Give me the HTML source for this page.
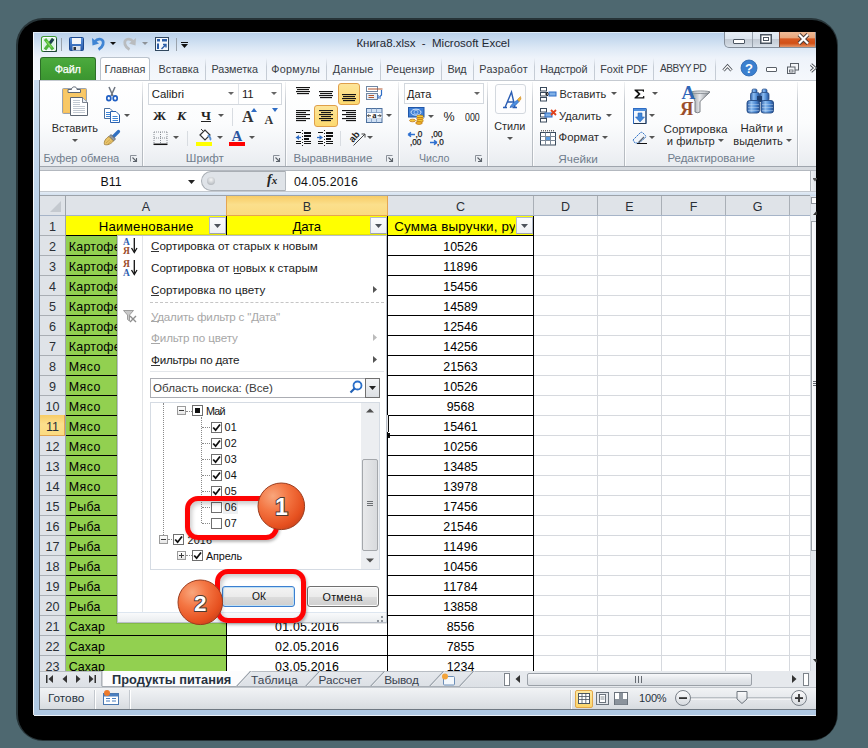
<!DOCTYPE html>
<html><head><meta charset="utf-8">
<style>
html,body{margin:0;padding:0}
body{width:868px;height:748px;overflow:hidden;background:#4e6870;position:relative;font-family:"Liberation Sans",sans-serif;color:#1e1e1e}
.a{position:absolute}
.t{position:absolute;white-space:nowrap;line-height:1}
svg{position:absolute;overflow:visible}
</style></head><body>
<div class="a" style="left:16px;top:18px;width:822px;height:723px;border-radius:27px;background:rgba(0,0,0,.5)"></div>
<div class="a" style="left:18px;top:20px;width:819px;height:720px;border-radius:25px;background:#000"></div>
<div class="a" style="left:33px;top:32px;width:783px;height:684px;background:linear-gradient(#b9d0ea,#c4d8ee 6px,#dce8f5 16px,#eef3fa 26px,#f5f8fc 48px,#d9e6f4 80px,#aec7e2 50%,#afc8e3 100%);border-radius:2px 0 0 5px"></div>
<div class="a" style="left:34px;top:80px;width:5px;height:636px;background:linear-gradient(#c9dcf0,#b9d0e8 25%,#aac4e1 50%,#b0c9e3 100%)"></div>
<div class="a" style="left:33px;top:32px;width:1px;height:683px;background:rgba(255,255,255,.85)"></div>
<div class="a" style="left:33px;top:32px;width:783px;height:1px;background:rgba(225,236,248,.9)"></div>
<div class="a" style="left:34px;top:715px;width:782px;height:1px;background:rgba(255,255,255,.75)"></div>
<div class="t" style="left:356.40px;top:37.87px;font-size:11.5px;letter-spacing:-0.012px;color:#1e2732;">Книга8.xlsx&nbsp; -&nbsp; Microsoft Excel</div>
<svg style="left:41px;top:36px" width="16" height="16">
<rect x="0.5" y="0.5" width="15" height="15" rx="2" fill="#fff" stroke="#3f9a35" stroke-width="1.1"/>
<path d="M15.5 2.5 V15.5 H2.5" fill="none" stroke="#1f4638" stroke-width="1"/>
<rect x="2" y="2" width="12" height="12" fill="#dff2e9"/>
<path d="M12 3 L4 13.5" stroke="#52b43c" stroke-width="3"/>
<path d="M12.2 2.8 L8.3 8" stroke="#1f3b52" stroke-width="2.8"/>
<path d="M4 3 L12 13.5" stroke="#4fb83a" stroke-width="3"/>
<path d="M5.5 5 L10.5 11.5" stroke="#8fdc5c" stroke-width="1.2"/>
</svg>
<div class="a" style="left:61px;top:38px;width:1px;height:13px;background:#9aa3ad"></div>
<svg style="left:69px;top:37px" width="15" height="14">
<defs><linearGradient id="sv" x1="0" y1="0" x2="0" y2="1"><stop offset="0" stop-color="#5c95dc"/><stop offset="1" stop-color="#2456a8"/></linearGradient></defs>
<rect x="0.5" y="0.5" width="14" height="13" rx="1" fill="url(#sv)" stroke="#1e4a90" stroke-width="1"/>
<rect x="3" y="1" width="9" height="6" fill="#f3f5f8"/>
<rect x="3.5" y="9" width="8" height="4.5" fill="#d9e2ec"/>
<rect x="4.5" y="10" width="2.5" height="3" fill="#2b2f36"/>
</svg>
<svg style="left:92px;top:37px" width="13" height="13">
<path d="M3 4.5 C6 0.5, 12.5 1.5, 11 7.5 C10 10.5, 8.5 11.5, 6.5 12.5" fill="none" stroke="#3f85d4" stroke-width="2.8"/>
<path d="M0 1 L0.5 8.5 L7 6.5 Z" fill="#3f85d4"/>
</svg>
<svg style="left:110px;top:42px" width="6" height="3"><path d="M0 0 H6 L3 3Z" fill="#111"/></svg>
<svg style="left:123px;top:37px" width="13" height="13">
<path d="M10 4.5 C7 0.5, 0.5 1.5, 2 7.5 C3 10.5, 4.5 11.5, 6.5 12.5" fill="none" stroke="#b9bcbf" stroke-width="2.8"/>
<path d="M13 1 L12.5 8.5 L6 6.5 Z" fill="#b9bcbf"/>
</svg>
<svg style="left:142px;top:42px" width="6" height="3"><path d="M0 0 H6 L3 3Z" fill="#8d9298"/></svg>
<svg style="left:155px;top:37px" width="14" height="14">
<rect x="0.5" y="0.5" width="13" height="13" fill="#f5f8fc" stroke="#31475e" stroke-width="1"/>
<rect x="2" y="2" width="3" height="2.5" fill="#2d5fa8"/><rect x="7" y="2" width="5" height="2.5" fill="#2d5fa8"/>
<rect x="2" y="6.5" width="2" height="5.5" fill="#2d5fa8"/>
<path d="M6.5 12 L11 7.5 M8 7.5 H11 V10.5" fill="none" stroke="#2d5fa8" stroke-width="1.4"/>
</svg>
<div class="a" style="left:176px;top:38px;width:1px;height:13px;background:#9aa3ad"></div>
<div class="a" style="left:181px;top:42px;width:7px;height:1.3px;background:#111"></div>
<svg style="left:181px;top:44px" width="7" height="4"><path d="M0 0 H7 L3.5 4Z" fill="#111"/></svg>
<div class="a" style="left:724px;top:32px;width:92px;height:16px;border:1px solid #848e9a;border-top:none;border-radius:0 0 0 5px;box-sizing:border-box;overflow:hidden;background:linear-gradient(#e6edf5,#dbe4ee 45%,#c3cbd5 50%,#cdd5de 80%,#dbe3ec)">
<div class="a" style="left:27px;top:0;width:1px;height:15px;background:#97a1ac"></div>
<div class="a" style="left:54px;top:0;width:38px;height:15px;background:linear-gradient(#eebb98,#e8a57a 40%,#d85a22 45%,#d25016 75%,#e59668);border-left:1px solid #8a4a33"></div>
</div>
<div class="a" style="left:733px;top:39px;width:12px;height:5px;background:#fff;border:1px solid #4b5561;border-radius:1px;box-sizing:border-box"></div>
<svg style="left:760px;top:34px" width="12" height="10"><rect x="0.75" y="0.75" width="10.5" height="8.5" fill="#fff" stroke="#4b5561" stroke-width="1.5"/><rect x="3.5" y="3.5" width="5" height="3" fill="none" stroke="#4b5561" stroke-width="1"/></svg>
<svg style="left:797px;top:33px" width="13" height="12"><path d="M2 1.5 L11 10.5 M11 1.5 L2 10.5" stroke="#4a3a36" stroke-width="4"/><path d="M2 1.5 L11 10.5 M11 1.5 L2 10.5" stroke="#fff" stroke-width="2.2"/></svg>
<div class="t" style="left:158.60px;top:63.86px;font-size:10.8px;letter-spacing:-0.007px;color:#383c44;">Вставка</div>
<div class="a" style="left:205px;top:58px;width:1px;height:22px;background:linear-gradient(rgba(200,208,218,0),#c5ccd5 40%,#c5ccd5)"></div>
<div class="t" style="left:211.50px;top:63.86px;font-size:10.8px;letter-spacing:-0.024px;color:#383c44;">Разметка</div>
<div class="a" style="left:266px;top:58px;width:1px;height:22px;background:linear-gradient(rgba(200,208,218,0),#c5ccd5 40%,#c5ccd5)"></div>
<div class="t" style="left:271.30px;top:63.86px;font-size:10.8px;letter-spacing:0.234px;color:#383c44;">Формулы</div>
<div class="a" style="left:326px;top:58px;width:1px;height:22px;background:linear-gradient(rgba(200,208,218,0),#c5ccd5 40%,#c5ccd5)"></div>
<div class="t" style="left:332.80px;top:63.86px;font-size:10.8px;letter-spacing:0.277px;color:#383c44;">Данные</div>
<div class="a" style="left:380px;top:58px;width:1px;height:22px;background:linear-gradient(rgba(200,208,218,0),#c5ccd5 40%,#c5ccd5)"></div>
<div class="t" style="left:386.30px;top:63.86px;font-size:10.8px;letter-spacing:0.049px;color:#383c44;">Рецензир</div>
<div class="a" style="left:441px;top:58px;width:1px;height:22px;background:linear-gradient(rgba(200,208,218,0),#c5ccd5 40%,#c5ccd5)"></div>
<div class="t" style="left:447.50px;top:63.86px;font-size:10.8px;letter-spacing:-0.269px;color:#383c44;">Вид</div>
<div class="a" style="left:473px;top:58px;width:1px;height:22px;background:linear-gradient(rgba(200,208,218,0),#c5ccd5 40%,#c5ccd5)"></div>
<div class="t" style="left:479.30px;top:63.86px;font-size:10.8px;letter-spacing:0.258px;color:#383c44;">Разработ</div>
<div class="a" style="left:534px;top:58px;width:1px;height:22px;background:linear-gradient(rgba(200,208,218,0),#c5ccd5 40%,#c5ccd5)"></div>
<div class="t" style="left:540.20px;top:63.86px;font-size:10.8px;letter-spacing:-0.171px;color:#383c44;">Надстрой</div>
<div class="a" style="left:594px;top:58px;width:1px;height:22px;background:linear-gradient(rgba(200,208,218,0),#c5ccd5 40%,#c5ccd5)"></div>
<div class="t" style="left:600.20px;top:63.86px;font-size:10.8px;letter-spacing:-0.063px;color:#383c44;">Foxit PDF</div>
<div class="a" style="left:653px;top:58px;width:1px;height:22px;background:linear-gradient(rgba(200,208,218,0),#c5ccd5 40%,#c5ccd5)"></div>
<div class="t" style="left:660.00px;top:64.37px;font-size:10.2px;letter-spacing:-0.591px;color:#383c44;">ABBYY PD</div>
<div class="a" style="left:715px;top:58px;width:1px;height:22px;background:linear-gradient(rgba(200,208,218,0),#c5ccd5 40%,#c5ccd5)"></div>
<div class="a" style="left:40px;top:57px;width:56px;height:24px;border:1px solid #2d6e28;border-bottom:none;border-radius:3px 3px 0 0;box-sizing:border-box;background:linear-gradient(#4caa3e,#42a035 50%,#3a9430)"></div>
<div class="t" style="left:54.70px;top:63.57px;font-size:10.9px;letter-spacing:-0.166px;color:#fff;-webkit-text-stroke:0.25px #fff">Файл</div>
<div class="a" style="left:100px;top:57px;width:50px;height:25px;border:1px solid #bac3cd;border-bottom:none;border-radius:3px 3px 0 0;box-sizing:border-box;background:linear-gradient(#fff,#fdfdfe)"></div>
<div class="t" style="left:104.60px;top:63.86px;font-size:10.8px;letter-spacing:-0.068px;color:#383c44;">Главная</div>
<svg style="left:722px;top:64px" width="11" height="8"><path d="M1.5 6.5 L5.5 2 L9.5 6.5" fill="none" stroke="#4a4f57" stroke-width="3"/><path d="M1.5 6.5 L5.5 2 L9.5 6.5" fill="none" stroke="#fff" stroke-width="1.2"/></svg>
<svg style="left:740px;top:59px" width="18" height="18"><circle cx="9" cy="9" r="8" fill="#3a7fcf"/><circle cx="9" cy="9" r="8" fill="none" stroke="#2b64ad" stroke-width="0.8"/>
<text x="9" y="13.8" text-anchor="middle" font-family="Liberation Sans" font-weight="bold" font-size="13" fill="#fff">?</text></svg>
<div class="a" style="left:766px;top:67px;width:11px;height:5px;background:#fff;border:1px solid #5a6068;border-radius:1px;box-sizing:border-box"></div>
<svg style="left:787px;top:63px" width="12" height="11"><rect x="3.5" y="0.5" width="8" height="6.5" fill="#f4f6f9" stroke="#5a6068" stroke-width="1"/><rect x="0.5" y="4" width="7.5" height="6.5" fill="#f4f6f9" stroke="#5a6068" stroke-width="1"/><rect x="2.5" y="7" width="3.5" height="2" fill="none" stroke="#5a6068" stroke-width="0.8"/></svg>
<svg style="left:810px;top:63px" width="6" height="10"><path d="M1 1.5 L5 5 L1 8.5" fill="none" stroke="#4a4f57" stroke-width="3"/><path d="M1 1.5 L5 5 L1 8.5" fill="none" stroke="#fff" stroke-width="1.2"/></svg>
<div class="a" style="left:39px;top:80px;width:777px;height:86px;background:linear-gradient(#ffffff,#fbfcfd 50%,#f1f3f6 80%,#e9ecf0);border-top:1px solid #c5cad1;box-sizing:border-box"></div>
<div class="a" style="left:39px;top:81px;width:1px;height:85px;background:#c9ced5"></div>
<div class="a" style="left:39px;top:166px;width:777px;height:1px;background:#9fa5ad"></div>
<div class="a" style="left:39px;top:167px;width:777px;height:3px;background:#d7dbe0"></div>
<div class="a" style="left:142px;top:82px;width:1px;height:84px;background:linear-gradient(rgba(190,195,202,.2),#c3c8ce 25%,#b4b9bf 100%)"></div>
<div class="a" style="left:143px;top:82px;width:1px;height:84px;background:rgba(255,255,255,.8)"></div>
<div class="a" style="left:285px;top:82px;width:1px;height:84px;background:linear-gradient(rgba(190,195,202,.2),#c3c8ce 25%,#b4b9bf 100%)"></div>
<div class="a" style="left:286px;top:82px;width:1px;height:84px;background:rgba(255,255,255,.8)"></div>
<div class="a" style="left:398px;top:82px;width:1px;height:84px;background:linear-gradient(rgba(190,195,202,.2),#c3c8ce 25%,#b4b9bf 100%)"></div>
<div class="a" style="left:399px;top:82px;width:1px;height:84px;background:rgba(255,255,255,.8)"></div>
<div class="a" style="left:487px;top:82px;width:1px;height:84px;background:linear-gradient(rgba(190,195,202,.2),#c3c8ce 25%,#b4b9bf 100%)"></div>
<div class="a" style="left:488px;top:82px;width:1px;height:84px;background:rgba(255,255,255,.8)"></div>
<div class="a" style="left:532px;top:82px;width:1px;height:84px;background:linear-gradient(rgba(190,195,202,.2),#c3c8ce 25%,#b4b9bf 100%)"></div>
<div class="a" style="left:533px;top:82px;width:1px;height:84px;background:rgba(255,255,255,.8)"></div>
<div class="a" style="left:624px;top:82px;width:1px;height:84px;background:linear-gradient(rgba(190,195,202,.2),#c3c8ce 25%,#b4b9bf 100%)"></div>
<div class="a" style="left:625px;top:82px;width:1px;height:84px;background:rgba(255,255,255,.8)"></div>
<div class="a" style="left:797px;top:82px;width:1px;height:84px;background:linear-gradient(rgba(190,195,202,.2),#c3c8ce 25%,#b4b9bf 100%)"></div>
<div class="a" style="left:798px;top:82px;width:1px;height:84px;background:rgba(255,255,255,.8)"></div>
<div class="t" style="left:43.40px;top:153.14px;font-size:11.18px;letter-spacing:0.003px;color:#707d8d;">Буфер обмена</div>
<svg style="left:130px;top:155px" width="7" height="7"><path d="M0.5 6.5 V0.5 H6.5" fill="none" stroke="#8a9099" stroke-width="1"/><path d="M2.5 2.5 L6 6 M3 6.5 H6.5 V3" fill="none" stroke="#5d636b" stroke-width="1.1"/></svg>
<svg style="left:61px;top:85px" width="29" height="32">
<rect x="1.5" y="3.5" width="24" height="25" rx="1" fill="#f7bf5a" stroke="#9ba4b0" stroke-width="1"/>
<rect x="3" y="5" width="21" height="22" fill="#f9cf6e" opacity=".6"/>
<path d="M7 7.5 V4.5 H10.5 C10.5 1, 16 1, 16 4.5 H19.5 V7.5 Z" fill="#fff" stroke="#5d6673" stroke-width="1"/>
<path d="M9.5 12.5 H21.5 L26.5 17.5 V30.5 H9.5 Z" fill="#fff" stroke="#5d6673" stroke-width="1"/>
<path d="M21.5 12.5 V17.5 H26.5" fill="#e9eef4" stroke="#5d6673" stroke-width="0.8"/>
<path d="M12 15.5 H19 M12 17.5 H19 M12 19.5 H19 M12 21.5 H24 M12 23.5 H24 M12 25.5 H24 M12 27.5 H24" stroke="#c3cad3" stroke-width="1"/>
</svg>
<div class="t" style="left:51.70px;top:122.96px;font-size:10.92px;letter-spacing:0.002px;color:#2b2b2b;">Вставить</div>
<svg style="left:71.5px;top:139.0px" width="6" height="3"><path d="M0 0 H6 L3 3Z" fill="#555"/></svg>
<svg style="left:106px;top:86px" width="12" height="16">
<path d="M3 1 L7 10 M9 1 L5 10" stroke="#6d7580" stroke-width="1.5"/>
<ellipse cx="2.8" cy="12.2" rx="2" ry="2.4" fill="none" stroke="#2160c4" stroke-width="1.7"/>
<ellipse cx="9.2" cy="12.2" rx="2" ry="2.4" fill="none" stroke="#2160c4" stroke-width="1.7"/>
</svg>
<svg style="left:104px;top:108px" width="16" height="15">
<path d="M0.5 0.5 H6 L8.5 3 V10.5 H0.5Z" fill="#fff" stroke="#4a6f9e" stroke-width="1"/>
<path d="M2 4.5 H6 M2 6.5 H7 M2 8.5 H7" stroke="#3d84d6" stroke-width="1"/>
<path d="M6.5 3.5 H12 L15.5 7 V14.5 H6.5Z" fill="#fff" stroke="#2a62b0" stroke-width="1"/>
<path d="M8.5 8.5 H13.5 M8.5 10.5 H14 M8.5 12.5 H14" stroke="#3d84d6" stroke-width="1"/>
</svg>
<svg style="left:123.6px;top:113.8px" width="6" height="3"><path d="M0 0 H6 L3 3Z" fill="#555"/></svg>
<svg style="left:103px;top:130px" width="18" height="16">
<path d="M10.5 6.5 L15.5 1.5" stroke="#2f6fc2" stroke-width="3.2" stroke-linecap="round"/>
<path d="M8 4.5 L12.5 9 L10.5 11 L6 6.5Z" fill="#8f96a0" stroke="#5b626b" stroke-width="0.8"/>
<path d="M6 6.5 L10.5 11 C8 14, 4.5 15.5, 1.5 14.5 C0.5 11.5, 3 8, 6 6.5Z" fill="#e9c46a" stroke="#9c7a35" stroke-width="0.8"/>
<path d="M3 13 L7 9.5 M5 14 L8.5 11" stroke="#c9a04a" stroke-width="0.8"/>
</svg>
<div class="t" style="left:185.80px;top:152.62px;font-size:11.55px;letter-spacing:0.000px;color:#707d8d;">Шрифт</div>
<svg style="left:273px;top:155px" width="7" height="7"><path d="M0.5 6.5 V0.5 H6.5" fill="none" stroke="#8a9099" stroke-width="1"/><path d="M2.5 2.5 L6 6 M3 6.5 H6.5 V3" fill="none" stroke="#5d636b" stroke-width="1.1"/></svg>
<div class="a" style="left:148px;top:83px;width:134px;height:22px;background:#fff;border:1px solid #d3d8de;box-sizing:border-box"></div>
<div class="a" style="left:238px;top:84px;width:1px;height:20px;background:#dfe3e8"></div>
<div class="t" style="left:151.70px;top:88.85px;font-size:11.4px;letter-spacing:-0.001px;color:#1a1a1a;">Calibri</div>
<svg style="left:228.2px;top:92.0px" width="6" height="3"><path d="M0 0 H6 L3 3Z" fill="#666"/></svg>
<div class="t" style="left:242.00px;top:88.85px;font-size:11.4px;letter-spacing:-0.333px;color:#1a1a1a;">11</div>
<svg style="left:271.4px;top:92.0px" width="6" height="3"><path d="M0 0 H6 L3 3Z" fill="#666"/></svg>
<div class="t" style="left:153px;top:108.7px;font-size:13.2px;font-family:'Liberation Serif',serif;font-weight:bold;color:#222">Ж</div>
<div class="t" style="left:177px;top:108.7px;font-size:13.5px;font-family:'Liberation Serif',serif;font-weight:bold;font-style:italic;color:#222">К</div>
<div class="t" style="left:201px;top:108.7px;font-size:13.5px;font-family:'Liberation Serif',serif;font-weight:bold;color:#222">Ч</div>
<div class="a" style="left:201px;top:121px;width:10px;height:1px;background:#222"></div>
<svg style="left:218px;top:113.5px" width="6" height="3"><path d="M0 0 H6 L3 3Z" fill="#555"/></svg>
<div class="a" style="left:232px;top:108px;width:1px;height:18px;background:#d8dce1"></div>
<div class="t" style="left:242px;top:109px;font-size:16px;font-family:'Liberation Serif',serif;font-weight:bold;color:#333">A</div>
<svg style="left:251px;top:108px" width="6" height="4"><path d="M0 4 L3 0 L6 4Z" fill="#2e6cc4"/></svg>
<div class="t" style="left:264.5px;top:113.8px;font-size:12px;font-family:'Liberation Serif',serif;font-weight:bold;color:#333">A</div>
<svg style="left:272px;top:108px" width="6" height="4"><path d="M0 0 L3 4 L6 0Z" fill="#2e6cc4"/></svg>
<svg style="left:153px;top:131px" width="15" height="14">
<path d="M1 1 H14 M1 7 H14 M1 1 V13 M7.5 1 V13 M14 1 V13" stroke="#8a8f96" stroke-width="1" stroke-dasharray="1 1"/>
<path d="M0.5 13.3 H14.5" stroke="#111" stroke-width="1.5"/></svg>
<svg style="left:173.3px;top:136.1px" width="6" height="3"><path d="M0 0 H6 L3 3Z" fill="#555"/></svg>
<div class="a" style="left:187px;top:131px;width:1px;height:15px;background:#d8dce1"></div>
<svg style="left:196px;top:129px" width="16" height="17">
<path d="M4 6 L9 1 L14 6 L9 11 Z" fill="#fff" stroke="#333" stroke-width="1.2"/>
<path d="M12 6 C14 8, 15 10, 14 11" stroke="#5a8fd0" stroke-width="2" fill="none"/>
<path d="M7 2 L5 0" stroke="#333" stroke-width="1"/>
<rect x="0" y="13" width="16" height="4" fill="#ffff00"/></svg>
<svg style="left:216.5px;top:136.1px" width="6" height="3"><path d="M0 0 H6 L3 3Z" fill="#555"/></svg>
<svg style="left:229px;top:129px" width="16" height="17">
<text x="8" y="12" text-anchor="middle" font-family="Liberation Serif" font-weight="bold" font-size="15" fill="#2a55a0">A</text>
<rect x="0" y="13" width="16" height="4" fill="#ff0000"/></svg>
<svg style="left:249.3px;top:136.1px" width="6" height="3"><path d="M0 0 H6 L3 3Z" fill="#555"/></svg>
<div class="t" style="left:293.50px;top:153.20px;font-size:11.46px;letter-spacing:0.002px;color:#707d8d;">Выравнивание</div>
<svg style="left:386px;top:155px" width="7" height="7"><path d="M0.5 6.5 V0.5 H6.5" fill="none" stroke="#8a9099" stroke-width="1"/><path d="M2.5 2.5 L6 6 M3 6.5 H6.5 V3" fill="none" stroke="#5d636b" stroke-width="1.1"/></svg>
<div class="a" style="left:296px;top:87px;width:14px;height:1px;background:#151515;box-shadow:0 0.4px 0 rgba(0,0,0,.35)"></div>
<div class="a" style="left:319px;top:91px;width:14px;height:1px;background:#151515;box-shadow:0 0.4px 0 rgba(0,0,0,.35)"></div>
<div class="a" style="left:297px;top:89px;width:12px;height:1px;background:#151515;box-shadow:0 0.4px 0 rgba(0,0,0,.35)"></div>
<div class="a" style="left:320px;top:93px;width:12px;height:1px;background:#151515;box-shadow:0 0.4px 0 rgba(0,0,0,.35)"></div>
<div class="a" style="left:296px;top:91px;width:14px;height:1px;background:#151515;box-shadow:0 0.4px 0 rgba(0,0,0,.35)"></div>
<div class="a" style="left:319px;top:95px;width:14px;height:1px;background:#151515;box-shadow:0 0.4px 0 rgba(0,0,0,.35)"></div>
<div class="a" style="left:297px;top:93px;width:12px;height:1px;background:#151515;box-shadow:0 0.4px 0 rgba(0,0,0,.35)"></div>
<div class="a" style="left:320px;top:97px;width:12px;height:1px;background:#151515;box-shadow:0 0.4px 0 rgba(0,0,0,.35)"></div>
<div class="a" style="left:338px;top:83px;width:22px;height:22px;background:linear-gradient(#fde59a,#fcd96f);border:1px solid #df9f4a;border-radius:3px;box-sizing:border-box"></div>
<div class="a" style="left:342px;top:94px;width:14px;height:1px;background:#151515;box-shadow:0 0.4px 0 rgba(0,0,0,.35)"></div>
<div class="a" style="left:343px;top:96px;width:12px;height:1px;background:#151515;box-shadow:0 0.4px 0 rgba(0,0,0,.35)"></div>
<div class="a" style="left:342px;top:98px;width:14px;height:1px;background:#151515;box-shadow:0 0.4px 0 rgba(0,0,0,.35)"></div>
<div class="a" style="left:343px;top:100px;width:12px;height:1px;background:#151515;box-shadow:0 0.4px 0 rgba(0,0,0,.35)"></div>
<div class="a" style="left:314px;top:105px;width:24px;height:22px;background:linear-gradient(#fde59a,#fcd96f);border:1px solid #df9f4a;border-radius:3px;box-sizing:border-box"></div>
<div class="a" style="left:296px;top:110px;width:14px;height:1px;background:#151515;box-shadow:0 0.4px 0 rgba(0,0,0,.35)"></div>
<div class="a" style="left:319px;top:110px;width:14px;height:1px;background:#151515;box-shadow:0 0.4px 0 rgba(0,0,0,.35)"></div>
<div class="a" style="left:342px;top:110px;width:14px;height:1px;background:#151515;box-shadow:0 0.4px 0 rgba(0,0,0,.35)"></div>
<div class="a" style="left:296px;top:112px;width:10px;height:1px;background:#151515;box-shadow:0 0.4px 0 rgba(0,0,0,.35)"></div>
<div class="a" style="left:321px;top:112px;width:10px;height:1px;background:#151515;box-shadow:0 0.4px 0 rgba(0,0,0,.35)"></div>
<div class="a" style="left:346px;top:112px;width:10px;height:1px;background:#151515;box-shadow:0 0.4px 0 rgba(0,0,0,.35)"></div>
<div class="a" style="left:296px;top:114px;width:14px;height:1px;background:#151515;box-shadow:0 0.4px 0 rgba(0,0,0,.35)"></div>
<div class="a" style="left:319px;top:114px;width:14px;height:1px;background:#151515;box-shadow:0 0.4px 0 rgba(0,0,0,.35)"></div>
<div class="a" style="left:342px;top:114px;width:14px;height:1px;background:#151515;box-shadow:0 0.4px 0 rgba(0,0,0,.35)"></div>
<div class="a" style="left:296px;top:116px;width:10px;height:1px;background:#151515;box-shadow:0 0.4px 0 rgba(0,0,0,.35)"></div>
<div class="a" style="left:321px;top:116px;width:10px;height:1px;background:#151515;box-shadow:0 0.4px 0 rgba(0,0,0,.35)"></div>
<div class="a" style="left:346px;top:116px;width:10px;height:1px;background:#151515;box-shadow:0 0.4px 0 rgba(0,0,0,.35)"></div>
<div class="a" style="left:296px;top:118px;width:14px;height:1px;background:#151515;box-shadow:0 0.4px 0 rgba(0,0,0,.35)"></div>
<div class="a" style="left:319px;top:118px;width:14px;height:1px;background:#151515;box-shadow:0 0.4px 0 rgba(0,0,0,.35)"></div>
<div class="a" style="left:342px;top:118px;width:14px;height:1px;background:#151515;box-shadow:0 0.4px 0 rgba(0,0,0,.35)"></div>
<div class="a" style="left:296px;top:120px;width:10px;height:1px;background:#151515;box-shadow:0 0.4px 0 rgba(0,0,0,.35)"></div>
<div class="a" style="left:321px;top:120px;width:10px;height:1px;background:#151515;box-shadow:0 0.4px 0 rgba(0,0,0,.35)"></div>
<div class="a" style="left:346px;top:120px;width:10px;height:1px;background:#151515;box-shadow:0 0.4px 0 rgba(0,0,0,.35)"></div>
<svg style="left:365px;top:85px" width="18" height="16">
<rect x="1.5" y="1.5" width="11" height="5" fill="#fff" stroke="#6f86a3" stroke-width="1"/>
<path d="M3 4 H17.5" stroke="#b0552e" stroke-width="1"/>
<rect x="1.5" y="8.5" width="11" height="6" fill="#e8f0f8" stroke="#6f86a3" stroke-width="1"/>
<path d="M3.5 10.5 H9 M3.5 12.5 H9" stroke="#b0552e" stroke-width="1"/>
<path d="M16.5 5 V10 L14.5 12" fill="none" stroke="#2e6cc4" stroke-width="1.2"/><path d="M13 10 V13 H16" fill="none" stroke="#2e6cc4" stroke-width="1.1"/>
</svg>
<svg style="left:366px;top:108px" width="17" height="15">
<rect x="0.5" y="0.5" width="15.5" height="14" fill="#cfe0f4" stroke="#4c6f9c" stroke-width="1"/>
<path d="M0.5 4.5 H16 M0.5 10.5 H16 M5.5 0.5 V4.5 M10.5 0.5 V4.5 M5.5 10.5 V14.5 M10.5 10.5 V14.5" stroke="#7d9bc0" stroke-width="0.8"/>
<rect x="1" y="5" width="14.5" height="5.5" fill="#fff"/>
<text x="8.3" y="10.2" text-anchor="middle" font-family="Liberation Serif" font-size="8.5" font-weight="bold" fill="#222">a</text>
<path d="M1.5 7.7 H5 M15 7.7 H11.5" stroke="#333" stroke-width="0.9"/><path d="M3 6.2 L1.5 7.7 L3 9.2 M13.5 6.2 L15 7.7 L13.5 9.2" fill="none" stroke="#333" stroke-width="0.8"/>
</svg>
<svg style="left:385.5px;top:113.5px" width="6" height="3"><path d="M0 0 H6 L3 3Z" fill="#555"/></svg>
<svg style="left:295px;top:130px" width="16" height="16">
<path d="M7.5 0 V16" stroke="#222" stroke-width="1" stroke-dasharray="1 2"/>
<rect x="9" y="2" width="7" height="2" fill="#111"/><rect x="9" y="5" width="7" height="2" fill="#111"/><rect x="9" y="8" width="5" height="2" fill="#111"/>
<rect x="1" y="11" width="5" height="1" fill="#111"/><rect x="9" y="11" width="7" height="1" fill="#111"/>
<rect x="1" y="13" width="5" height="1" fill="#111"/><rect x="9" y="13" width="7" height="1" fill="#111"/>
<rect x="1" y="2" width="5" height="1" fill="#111"/>
<path d="M0.5 7.5 L4 5 V10Z" fill="#2e6cc4"/><path d="M2.5 7.5 H6" stroke="#2e6cc4" stroke-width="1.3"/></svg>
<svg style="left:317px;top:130px" width="16" height="16">
<path d="M7.5 0 V16" stroke="#222" stroke-width="1" stroke-dasharray="1 2"/>
<rect x="9" y="2" width="7" height="2" fill="#111"/><rect x="9" y="5" width="7" height="2" fill="#111"/><rect x="9" y="8" width="5" height="2" fill="#111"/>
<rect x="1" y="11" width="5" height="1" fill="#111"/><rect x="9" y="11" width="7" height="1" fill="#111"/>
<rect x="1" y="13" width="5" height="1" fill="#111"/><rect x="9" y="13" width="7" height="1" fill="#111"/>
<rect x="1" y="2" width="5" height="1" fill="#111"/>
<path d="M6 7.5 L2.5 5 V10Z" fill="#2e6cc4"/><path d="M0 7.5 H3.5" stroke="#2e6cc4" stroke-width="1.3"/></svg>
<div class="a" style="left:340px;top:131px;width:1px;height:15px;background:#d8dce1"></div>
<svg style="left:348px;top:128px" width="20" height="19">
<text x="0" y="0" transform="translate(5 15) rotate(-50)" font-family="Liberation Sans" font-weight="bold" font-size="9.5" fill="#222">ab</text>
<path d="M5.5 17.5 L17 6 M13.5 6 H17 V9.5" fill="none" stroke="#444" stroke-width="1"/></svg>
<svg style="left:366.6px;top:135.9px" width="6" height="3"><path d="M0 0 H6 L3 3Z" fill="#555"/></svg>
<div class="t" style="left:418.90px;top:153.49px;font-size:10.64px;letter-spacing:0.000px;color:#707d8d;">Число</div>
<svg style="left:475px;top:155px" width="7" height="7"><path d="M0.5 6.5 V0.5 H6.5" fill="none" stroke="#8a9099" stroke-width="1"/><path d="M2.5 2.5 L6 6 M3 6.5 H6.5 V3" fill="none" stroke="#5d636b" stroke-width="1.1"/></svg>
<div class="a" style="left:404px;top:83px;width:80px;height:21px;background:#fff;border:1px solid #d3d8de;box-sizing:border-box"></div>
<div class="t" style="left:407.00px;top:89.01px;font-size:10.97px;letter-spacing:0.004px;color:#1a1a1a;">Дата</div>
<svg style="left:473.5px;top:91.8px" width="6" height="3"><path d="M0 0 H6 L3 3Z" fill="#666"/></svg>
<svg style="left:408px;top:107px" width="17" height="18">
<rect x="0.5" y="0.5" width="15.5" height="9.5" fill="#3f7fd6" stroke="#1f56a8" stroke-width="1"/>
<ellipse cx="8" cy="5.2" rx="5" ry="3" fill="none" stroke="#d6e6fa" stroke-width="1"/>
<ellipse cx="8" cy="5.2" rx="2" ry="2" fill="none" stroke="#b8d2f2" stroke-width=".8"/>
<g stroke="#b86a10" stroke-width=".7"><ellipse cx="12" cy="9.5" rx="3.3" ry="1.4" fill="#f5d23a"/><ellipse cx="12" cy="11.7" rx="3.3" ry="1.4" fill="#f0b82a"/><ellipse cx="12" cy="13.9" rx="3.3" ry="1.4" fill="#f5d23a"/><ellipse cx="11" cy="16" rx="3.3" ry="1.4" fill="#f0b82a"/>
<ellipse cx="4.5" cy="13.5" rx="3" ry="1.3" fill="#f5c83a"/></g>
</svg>
<svg style="left:428.3px;top:114.5px" width="6" height="3"><path d="M0 0 H6 L3 3Z" fill="#555"/></svg>
<div class="t" style="left:443.40px;top:110.72px;font-size:12.5px;color:#222;">%</div>
<div class="t" style="left:465.4px;top:110.8px;font-size:11.6px;color:#222;transform:scaleX(0.76);transform-origin:0 0">000</div>
<svg style="left:407px;top:129px" width="40" height="18">
<g font-family="Liberation Sans" font-size="8.2" fill="#222" stroke="#222" stroke-width=".25">
<text x="8.5" y="7.6">,0</text><text x="3" y="15.6">,00</text>
<text x="24" y="7.6">,00</text><text x="30" y="15.6">,0</text></g>
<path d="M1 5.5 L4 3.3 M1 5.5 L4 7.7 M1 5.5 H8" fill="none" stroke="#2d6fd0" stroke-width="1.5"/>
<path d="M30 13.5 L27 11.3 M30 13.5 L27 15.7 M30 13.5 H23" fill="none" stroke="#2d6fd0" stroke-width="1.5"/>
</svg>
<div class="a" style="left:495px;top:84px;width:31px;height:30px;background:#fdfdfe;border:1px solid #d3d8de;border-radius:3px;box-sizing:border-box"></div>
<svg style="left:502px;top:91px" width="20" height="18">
<path d="M1 16.5 H5 M10.5 16.5 H15 M3 16.5 L9.5 1 L13 16.5 M5 11 H11.5" fill="none" stroke="#2a5db3" stroke-width="1.4"/>
<path d="M8 16.5 C10 12, 13 10.5, 16 9 L17 10.5 C15 13, 12 16, 8 16.5Z" fill="#4d8fe0" stroke="#2a5db3" stroke-width=".7"/>
<path d="M15.5 8.5 L18.5 5.5 L19 8 L17 10.5Z" fill="#f2b632" stroke="#c47a1a" stroke-width=".5"/>
</svg>
<div class="t" style="left:494.20px;top:121.06px;font-size:10.8px;letter-spacing:-0.003px;color:#2b2b2b;">Стили</div>
<svg style="left:507.3px;top:137.0px" width="6" height="3"><path d="M0 0 H6 L3 3Z" fill="#555"/></svg>
<div class="t" style="left:558.30px;top:152.65px;font-size:11.75px;letter-spacing:-0.002px;color:#707d8d;">Ячейки</div>
<svg style="left:540px;top:87px" width="17" height="15"><rect x="0.5" y="0.5" width="6" height="3.5" fill="#fff" stroke="#3a4a5c" stroke-width="1"/><rect x="0.5" y="5.5" width="6" height="3.5" fill="#fff" stroke="#3a4a5c" stroke-width="1"/><rect x="0.5" y="10.5" width="6" height="3.5" fill="#fff" stroke="#3a4a5c" stroke-width="1"/><rect x="9" y="5" width="7" height="4" fill="#7fb0e6" stroke="#2e6cc4" stroke-width="1"/><path d="M5 7 H9" stroke="#222" stroke-width="1"/><path d="M8 5 L6 7 L8 9" fill="none" stroke="#222" stroke-width="1"/></svg>
<div class="t" style="left:559.50px;top:88.99px;font-size:11px;letter-spacing:0.011px;color:#2b2b2b;">Вставить</div>
<svg style="left:610.5px;top:91.8px" width="6" height="3"><path d="M0 0 H6 L3 3Z" fill="#555"/></svg>
<svg style="left:540px;top:108px" width="17" height="15"><rect x="0.5" y="0.5" width="6" height="3.5" fill="#fff" stroke="#3a4a5c" stroke-width="1"/><rect x="0.5" y="5.5" width="6" height="3.5" fill="#fff" stroke="#3a4a5c" stroke-width="1"/><rect x="0.5" y="10.5" width="6" height="3.5" fill="#fff" stroke="#3a4a5c" stroke-width="1"/><rect x="5" y="5" width="7" height="4" fill="#7fb0e6" stroke="#2e6cc4" stroke-width="1"/><path d="M11 2 L16 7 M16 2 L11 7" stroke="#e0401a" stroke-width="1.8"/></svg>
<div class="t" style="left:559.00px;top:110.80px;font-size:11.11px;letter-spacing:-0.002px;color:#2b2b2b;">Удалить</div>
<svg style="left:605.6px;top:114.0px" width="6" height="3"><path d="M0 0 H6 L3 3Z" fill="#555"/></svg>
<svg style="left:540px;top:130px" width="17" height="16">
<rect x="0.5" y="2.5" width="15" height="12.5" fill="#fff" stroke="#3a4a5c" stroke-width="1"/>
<path d="M0.5 6.5 H15.5 M0.5 10.5 H15.5 M5.5 2.5 V15 M10.5 2.5 V15" stroke="#7d8a99" stroke-width="1"/>
<rect x="6" y="7" width="4" height="3" fill="#5b9be0"/>
<path d="M1 0.8 H15" stroke="#333" stroke-width="1" stroke-dasharray="1 1"/></svg>
<div class="t" style="left:558.60px;top:132.38px;font-size:11.37px;letter-spacing:0.003px;color:#2b2b2b;">Формат</div>
<svg style="left:602.4px;top:136.0px" width="6" height="3"><path d="M0 0 H6 L3 3Z" fill="#555"/></svg>
<div class="t" style="left:667.40px;top:153.49px;font-size:11.47px;letter-spacing:0.002px;color:#707d8d;">Редактирование</div>
<svg style="left:634px;top:89px" width="11" height="10"><path d="M0.5 0.5 H10 V2.8 H9 L8.6 1.8 H3.6 L6.6 5 L3.4 8.2 H8.8 L9.3 7 H10.3 V9.5 H0.5 V8.6 L4.3 5 L0.5 1.4Z" fill="#111"/></svg>
<svg style="left:651.6px;top:92.0px" width="6" height="3"><path d="M0 0 H6 L3 3Z" fill="#555"/></svg>
<svg style="left:633px;top:108px" width="14" height="16">
<rect x="0.5" y="0.5" width="12.5" height="15" fill="#f4f8fd" stroke="#2e6cc4" stroke-width="1"/>
<path d="M13 1 V15.5 H1" fill="none" stroke="#23364f" stroke-width="1"/>
<rect x="1" y="1" width="12" height="2" fill="#4f8fdc"/>
<path d="M5 5 H9 V9 H11.5 L7 14 L2.5 9 H5Z" fill="#3f86d8" stroke="#2a66b8" stroke-width=".6"/></svg>
<svg style="left:649px;top:114.0px" width="6" height="3"><path d="M0 0 H6 L3 3Z" fill="#555"/></svg>
<svg style="left:632px;top:131px" width="16" height="13">
<path d="M1 9 L8 2 C9 1, 10 1, 11 2 L13 4 C14 5, 14 6, 13 7 L7 12 H3 Z" fill="#f1f5fa" stroke="#3a78c8" stroke-width="1" stroke-dasharray="2 .6"/><path d="M12 6 L6.5 11.5" stroke="#5b6470" stroke-width="1.2"/>
<path d="M5 12.5 H15" stroke="#111" stroke-width="1"/></svg>
<svg style="left:649px;top:136.0px" width="6" height="3"><path d="M0 0 H6 L3 3Z" fill="#555"/></svg>
<svg style="left:680px;top:85px" width="31" height="31">
<defs><linearGradient id="fn" x1="0" x2="1"><stop offset="0" stop-color="#8c9198"/><stop offset=".45" stop-color="#e9ebee"/><stop offset="1" stop-color="#7d838a"/></linearGradient></defs>
<path d="M11.5 7 H30 L20 16.5 V27 Q17.5 28.5 15 27 V16.5 Z" fill="url(#fn)" stroke="#6f757c" stroke-width=".9"/>
<ellipse cx="20.7" cy="7.2" rx="9.3" ry="1.3" fill="#d9dcdf" stroke="#6f757c" stroke-width=".7"/>
<text x="1.5" y="14.4" font-family="Liberation Serif" font-weight="bold" font-size="19" fill="#2f66b8">A</text>
<text x="0" y="29.6" font-family="Liberation Serif" font-weight="bold" font-size="18.5" fill="#9b4e2c">Я</text>
</svg>
<div class="t" style="left:663.50px;top:122.61px;font-size:11.68px;letter-spacing:0.000px;color:#2b2b2b;">Сортировка</div>
<div class="t" style="left:666.80px;top:135.72px;font-size:11.2px;letter-spacing:0.058px;color:#2b2b2b;">и фильтр</div>
<svg style="left:718.2px;top:138.8px" width="6" height="3"><path d="M0 0 H6 L3 3Z" fill="#555"/></svg>
<svg style="left:746px;top:88px" width="30" height="27">
<defs><linearGradient id="bn" x1="0" x2="1"><stop offset="0" stop-color="#2d5fa8"/><stop offset=".35" stop-color="#8dbdf0"/><stop offset=".7" stop-color="#4a86d0"/><stop offset="1" stop-color="#254f8f"/></linearGradient></defs>
<rect x="6" y="1" width="5" height="4" rx="1.5" fill="url(#bn)" stroke="#2a4f86" stroke-width=".7"/>
<rect x="16" y="1" width="5" height="4" rx="1.5" fill="url(#bn)" stroke="#2a4f86" stroke-width=".7"/>
<rect x="4.5" y="4.5" width="9" height="8.5" rx="2" fill="url(#bn)" stroke="#2a4f86" stroke-width=".8"/>
<rect x="14" y="4.5" width="9" height="8.5" rx="2" fill="url(#bn)" stroke="#2a4f86" stroke-width=".8"/>
<rect x="11" y="8" width="5" height="6" fill="#1f3f70"/>
<rect x="1" y="12.5" width="12.5" height="12.5" rx="2.5" fill="url(#bn)" stroke="#244a82" stroke-width=".9"/>
<rect x="15" y="12.5" width="12.5" height="12.5" rx="2.5" fill="url(#bn)" stroke="#244a82" stroke-width=".9"/>
<path d="M2 16.5 H13 M2 19.5 H13 M2 22.5 H13 M16 16.5 H27 M16 19.5 H27 M16 22.5 H27" stroke="#cfe2f7" stroke-width=".6" opacity=".7"/>
</svg>
<div class="t" style="left:740.60px;top:122.82px;font-size:11.44px;letter-spacing:-0.002px;color:#2b2b2b;">Найти и</div>
<div class="t" style="left:733.30px;top:135.84px;font-size:11.06px;letter-spacing:-0.003px;color:#2b2b2b;">выделить</div>
<svg style="left:786px;top:138.8px" width="6" height="3"><path d="M0 0 H6 L3 3Z" fill="#555"/></svg>
<div class="a" style="left:39px;top:170px;width:777px;height:1px;background:#b3b8bf"></div>
<div class="a" style="left:39px;top:171px;width:777px;height:20px;background:#fff"></div>
<div class="a" style="left:39px;top:191px;width:777px;height:1px;background:#c3c8ce"></div>
<div class="a" style="left:39px;top:192px;width:777px;height:3px;background:linear-gradient(#e3ecf6,#d3e0ee)"></div>
<div class="t" style="left:100.45px;top:175.73px;font-size:12.37px;letter-spacing:0.005px;color:#111;">B11</div>
<svg style="left:188px;top:180px" width="7" height="4"><path d="M0 0 H7 L3.5 4Z" fill="#222"/></svg>
<div class="a" style="left:201px;top:171px;width:85px;height:20px;background:#dfe3e8;border:1px solid #a9aeb4;border-right:1px solid #b5bac0;border-radius:10px 0 0 10px;box-sizing:border-box"></div>
<svg style="left:206px;top:176px" width="10" height="10"><defs><radialGradient id="gc" cx="50%" cy="35%" r="60%"><stop offset="0" stop-color="#f4f5f6"/><stop offset="1" stroke-color="#b3b7bc" stop-color="#b8bcc1"/></radialGradient></defs><circle cx="5" cy="5" r="4" fill="url(#gc)"/></svg>
<div class="t" style="left:267px;top:173px;font-size:14px;font-family:'Liberation Serif',serif;font-style:italic;font-weight:bold;color:#222">f<span style="font-size:11px;position:relative;left:0px;top:0px">x</span></div>
<div class="t" style="left:294.00px;top:175.83px;font-size:12.37px;letter-spacing:0.211px;color:#111;">04.05.2016</div>
<div class="a" style="left:810px;top:171px;width:6px;height:20px;background:linear-gradient(90deg,#f0f2f5,#dde1e6);border-left:1px solid #b0b5bb;box-sizing:border-box"></div>
<svg style="left:813px;top:178px" width="4" height="4"><path d="M0 0 H4 V1 L2 3.5 L0 1Z" fill="#555"/></svg>
<div class="a" style="left:39px;top:195px;width:771px;height:1px;background:#9da3aa"></div>
<div class="a" style="left:39px;top:196px;width:771px;height:19px;background:#dfe3e8"></div>
<div class="a" style="left:39px;top:215px;width:771px;height:1px;background:#a6b4c8"></div>
<svg style="left:50px;top:201px" width="12" height="11"><path d="M11 0 L11 11 L0 11 Z" fill="#c4c9cf"/></svg>
<div class="a" style="left:39px;top:216px;width:771px;height:455px;background:#fff"></div>
<div class="a" style="left:39px;top:216px;width:26px;height:455px;background:#dfe3e8"></div>
<div class="a" style="left:65px;top:196px;width:1px;height:475px;background:#9ea4ab"></div>
<div class="a" style="left:226px;top:196px;width:1px;height:19px;background:#a9afb6"></div>
<div class="t" style="left:141.83px;top:201.02px;font-size:12.5px;color:#2a2f36;">A</div>
<div class="a" style="left:227px;top:196px;width:160px;height:19px;background:linear-gradient(#f7cc66,#fbdf8c 45%,#fbdb80)"></div>
<div class="a" style="left:226px;top:196px;width:1px;height:20px;background:#e4a552"></div>
<div class="a" style="left:227px;top:215px;width:161px;height:1px;background:#e4a552"></div>
<div class="a" style="left:387px;top:196px;width:1px;height:19px;background:#e4a552"></div>
<div class="t" style="left:302.83px;top:201.02px;font-size:12.5px;color:#2a2f36;">B</div>
<div class="a" style="left:533px;top:196px;width:1px;height:19px;background:#a9afb6"></div>
<div class="t" style="left:455.99px;top:201.02px;font-size:12.5px;color:#2a2f36;">C</div>
<div class="a" style="left:597px;top:196px;width:1px;height:19px;background:#a9afb6"></div>
<div class="t" style="left:560.99px;top:201.02px;font-size:12.5px;color:#2a2f36;">D</div>
<div class="a" style="left:661px;top:196px;width:1px;height:19px;background:#a9afb6"></div>
<div class="t" style="left:625.33px;top:201.02px;font-size:12.5px;color:#2a2f36;">E</div>
<div class="a" style="left:725px;top:196px;width:1px;height:19px;background:#a9afb6"></div>
<div class="t" style="left:689.68px;top:201.02px;font-size:12.5px;color:#2a2f36;">F</div>
<div class="a" style="left:789px;top:196px;width:1px;height:19px;background:#a9afb6"></div>
<div class="t" style="left:752.64px;top:201.02px;font-size:12.5px;color:#2a2f36;">G</div>
<div class="a" style="left:226px;top:216px;width:1px;height:455px;background:#d6d9de"></div>
<div class="a" style="left:387px;top:216px;width:1px;height:455px;background:#d6d9de"></div>
<div class="a" style="left:533px;top:216px;width:1px;height:455px;background:#d6d9de"></div>
<div class="a" style="left:597px;top:216px;width:1px;height:455px;background:#d6d9de"></div>
<div class="a" style="left:661px;top:216px;width:1px;height:455px;background:#d6d9de"></div>
<div class="a" style="left:725px;top:216px;width:1px;height:455px;background:#d6d9de"></div>
<div class="a" style="left:789px;top:216px;width:1px;height:455px;background:#d6d9de"></div>
<div class="a" style="left:39px;top:235px;width:26px;height:1px;background:#a9aeb4"></div>
<div class="a" style="left:66px;top:235px;width:744px;height:1px;background:#d6d9de"></div>
<div class="a" style="left:39px;top:255px;width:26px;height:1px;background:#a9aeb4"></div>
<div class="a" style="left:66px;top:255px;width:744px;height:1px;background:#d6d9de"></div>
<div class="a" style="left:39px;top:275px;width:26px;height:1px;background:#a9aeb4"></div>
<div class="a" style="left:66px;top:275px;width:744px;height:1px;background:#d6d9de"></div>
<div class="a" style="left:39px;top:295px;width:26px;height:1px;background:#a9aeb4"></div>
<div class="a" style="left:66px;top:295px;width:744px;height:1px;background:#d6d9de"></div>
<div class="a" style="left:39px;top:315px;width:26px;height:1px;background:#a9aeb4"></div>
<div class="a" style="left:66px;top:315px;width:744px;height:1px;background:#d6d9de"></div>
<div class="a" style="left:39px;top:335px;width:26px;height:1px;background:#a9aeb4"></div>
<div class="a" style="left:66px;top:335px;width:744px;height:1px;background:#d6d9de"></div>
<div class="a" style="left:39px;top:355px;width:26px;height:1px;background:#a9aeb4"></div>
<div class="a" style="left:66px;top:355px;width:744px;height:1px;background:#d6d9de"></div>
<div class="a" style="left:39px;top:375px;width:26px;height:1px;background:#a9aeb4"></div>
<div class="a" style="left:66px;top:375px;width:744px;height:1px;background:#d6d9de"></div>
<div class="a" style="left:39px;top:395px;width:26px;height:1px;background:#a9aeb4"></div>
<div class="a" style="left:66px;top:395px;width:744px;height:1px;background:#d6d9de"></div>
<div class="a" style="left:39px;top:415px;width:26px;height:1px;background:#a9aeb4"></div>
<div class="a" style="left:66px;top:415px;width:744px;height:1px;background:#d6d9de"></div>
<div class="a" style="left:39px;top:435px;width:26px;height:1px;background:#a9aeb4"></div>
<div class="a" style="left:66px;top:435px;width:744px;height:1px;background:#d6d9de"></div>
<div class="a" style="left:39px;top:455px;width:26px;height:1px;background:#a9aeb4"></div>
<div class="a" style="left:66px;top:455px;width:744px;height:1px;background:#d6d9de"></div>
<div class="a" style="left:39px;top:475px;width:26px;height:1px;background:#a9aeb4"></div>
<div class="a" style="left:66px;top:475px;width:744px;height:1px;background:#d6d9de"></div>
<div class="a" style="left:39px;top:495px;width:26px;height:1px;background:#a9aeb4"></div>
<div class="a" style="left:66px;top:495px;width:744px;height:1px;background:#d6d9de"></div>
<div class="a" style="left:39px;top:515px;width:26px;height:1px;background:#a9aeb4"></div>
<div class="a" style="left:66px;top:515px;width:744px;height:1px;background:#d6d9de"></div>
<div class="a" style="left:39px;top:535px;width:26px;height:1px;background:#a9aeb4"></div>
<div class="a" style="left:66px;top:535px;width:744px;height:1px;background:#d6d9de"></div>
<div class="a" style="left:39px;top:555px;width:26px;height:1px;background:#a9aeb4"></div>
<div class="a" style="left:66px;top:555px;width:744px;height:1px;background:#d6d9de"></div>
<div class="a" style="left:39px;top:575px;width:26px;height:1px;background:#a9aeb4"></div>
<div class="a" style="left:66px;top:575px;width:744px;height:1px;background:#d6d9de"></div>
<div class="a" style="left:39px;top:595px;width:26px;height:1px;background:#a9aeb4"></div>
<div class="a" style="left:66px;top:595px;width:744px;height:1px;background:#d6d9de"></div>
<div class="a" style="left:39px;top:615px;width:26px;height:1px;background:#a9aeb4"></div>
<div class="a" style="left:66px;top:615px;width:744px;height:1px;background:#d6d9de"></div>
<div class="a" style="left:39px;top:635px;width:26px;height:1px;background:#a9aeb4"></div>
<div class="a" style="left:66px;top:635px;width:744px;height:1px;background:#d6d9de"></div>
<div class="a" style="left:39px;top:655px;width:26px;height:1px;background:#a9aeb4"></div>
<div class="a" style="left:66px;top:655px;width:744px;height:1px;background:#d6d9de"></div>
<div class="a" style="left:39px;top:675px;width:26px;height:1px;background:#a9aeb4"></div>
<div class="a" style="left:66px;top:675px;width:744px;height:1px;background:#d6d9de"></div>
<div class="t" style="left:49.00px;top:221.43px;font-size:12.6px;color:#2a2f36;">1</div>
<div class="t" style="left:49.00px;top:241.43px;font-size:12.6px;color:#2a2f36;">2</div>
<div class="t" style="left:49.00px;top:261.43px;font-size:12.6px;color:#2a2f36;">3</div>
<div class="t" style="left:49.00px;top:281.43px;font-size:12.6px;color:#2a2f36;">4</div>
<div class="t" style="left:49.00px;top:301.43px;font-size:12.6px;color:#2a2f36;">5</div>
<div class="t" style="left:49.00px;top:321.43px;font-size:12.6px;color:#2a2f36;">6</div>
<div class="t" style="left:49.00px;top:341.43px;font-size:12.6px;color:#2a2f36;">7</div>
<div class="t" style="left:49.00px;top:361.43px;font-size:12.6px;color:#2a2f36;">8</div>
<div class="t" style="left:49.00px;top:381.43px;font-size:12.6px;color:#2a2f36;">9</div>
<div class="t" style="left:45.49px;top:401.43px;font-size:12.6px;color:#2a2f36;">10</div>
<div class="a" style="left:39px;top:415px;width:26px;height:20px;background:linear-gradient(#f7cc66,#fbdf8c 45%,#fbdb80)"></div>
<div class="a" style="left:39px;top:435px;width:26px;height:1px;background:#e0a451"></div>
<div class="a" style="left:64px;top:415px;width:1px;height:21px;background:#e0a451"></div>
<div class="t" style="left:45.96px;top:421.43px;font-size:12.6px;color:#2a2f36;">11</div>
<div class="t" style="left:45.49px;top:441.43px;font-size:12.6px;color:#2a2f36;">12</div>
<div class="t" style="left:45.49px;top:461.43px;font-size:12.6px;color:#2a2f36;">13</div>
<div class="t" style="left:45.49px;top:481.43px;font-size:12.6px;color:#2a2f36;">14</div>
<div class="t" style="left:45.49px;top:501.43px;font-size:12.6px;color:#2a2f36;">15</div>
<div class="t" style="left:45.49px;top:521.43px;font-size:12.6px;color:#2a2f36;">16</div>
<div class="t" style="left:45.49px;top:541.43px;font-size:12.6px;color:#2a2f36;">17</div>
<div class="t" style="left:45.49px;top:561.43px;font-size:12.6px;color:#2a2f36;">18</div>
<div class="t" style="left:45.49px;top:581.43px;font-size:12.6px;color:#2a2f36;">19</div>
<div class="t" style="left:45.49px;top:601.43px;font-size:12.6px;color:#2a2f36;">20</div>
<div class="t" style="left:45.49px;top:621.43px;font-size:12.6px;color:#2a2f36;">21</div>
<div class="t" style="left:45.49px;top:641.43px;font-size:12.6px;color:#2a2f36;">22</div>
<div class="t" style="left:45.49px;top:661.43px;font-size:12.6px;color:#2a2f36;">23</div>
<div class="a" style="left:66px;top:216px;width:160px;height:19px;background:#ffff00"></div>
<div class="a" style="left:227px;top:216px;width:160px;height:19px;background:#ffff00"></div>
<div class="a" style="left:388px;top:216px;width:145px;height:19px;background:#ffff00"></div>
<div class="a" style="left:66px;top:235px;width:160px;height:20px;background:#92d050"></div>
<div class="a" style="left:227px;top:235px;width:160px;height:20px;background:#fff"></div>
<div class="a" style="left:388px;top:235px;width:145px;height:20px;background:#fff"></div>
<div class="a" style="left:66px;top:255px;width:160px;height:20px;background:#92d050"></div>
<div class="a" style="left:227px;top:255px;width:160px;height:20px;background:#fff"></div>
<div class="a" style="left:388px;top:255px;width:145px;height:20px;background:#fff"></div>
<div class="a" style="left:66px;top:275px;width:160px;height:20px;background:#92d050"></div>
<div class="a" style="left:227px;top:275px;width:160px;height:20px;background:#fff"></div>
<div class="a" style="left:388px;top:275px;width:145px;height:20px;background:#fff"></div>
<div class="a" style="left:66px;top:295px;width:160px;height:20px;background:#92d050"></div>
<div class="a" style="left:227px;top:295px;width:160px;height:20px;background:#fff"></div>
<div class="a" style="left:388px;top:295px;width:145px;height:20px;background:#fff"></div>
<div class="a" style="left:66px;top:315px;width:160px;height:20px;background:#92d050"></div>
<div class="a" style="left:227px;top:315px;width:160px;height:20px;background:#fff"></div>
<div class="a" style="left:388px;top:315px;width:145px;height:20px;background:#fff"></div>
<div class="a" style="left:66px;top:335px;width:160px;height:20px;background:#92d050"></div>
<div class="a" style="left:227px;top:335px;width:160px;height:20px;background:#fff"></div>
<div class="a" style="left:388px;top:335px;width:145px;height:20px;background:#fff"></div>
<div class="a" style="left:66px;top:355px;width:160px;height:20px;background:#92d050"></div>
<div class="a" style="left:227px;top:355px;width:160px;height:20px;background:#fff"></div>
<div class="a" style="left:388px;top:355px;width:145px;height:20px;background:#fff"></div>
<div class="a" style="left:66px;top:375px;width:160px;height:20px;background:#92d050"></div>
<div class="a" style="left:227px;top:375px;width:160px;height:20px;background:#fff"></div>
<div class="a" style="left:388px;top:375px;width:145px;height:20px;background:#fff"></div>
<div class="a" style="left:66px;top:395px;width:160px;height:20px;background:#92d050"></div>
<div class="a" style="left:227px;top:395px;width:160px;height:20px;background:#fff"></div>
<div class="a" style="left:388px;top:395px;width:145px;height:20px;background:#fff"></div>
<div class="a" style="left:66px;top:415px;width:160px;height:20px;background:#92d050"></div>
<div class="a" style="left:227px;top:415px;width:160px;height:20px;background:#fff"></div>
<div class="a" style="left:388px;top:415px;width:145px;height:20px;background:#fff"></div>
<div class="a" style="left:66px;top:435px;width:160px;height:20px;background:#92d050"></div>
<div class="a" style="left:227px;top:435px;width:160px;height:20px;background:#fff"></div>
<div class="a" style="left:388px;top:435px;width:145px;height:20px;background:#fff"></div>
<div class="a" style="left:66px;top:455px;width:160px;height:20px;background:#92d050"></div>
<div class="a" style="left:227px;top:455px;width:160px;height:20px;background:#fff"></div>
<div class="a" style="left:388px;top:455px;width:145px;height:20px;background:#fff"></div>
<div class="a" style="left:66px;top:475px;width:160px;height:20px;background:#92d050"></div>
<div class="a" style="left:227px;top:475px;width:160px;height:20px;background:#fff"></div>
<div class="a" style="left:388px;top:475px;width:145px;height:20px;background:#fff"></div>
<div class="a" style="left:66px;top:495px;width:160px;height:20px;background:#92d050"></div>
<div class="a" style="left:227px;top:495px;width:160px;height:20px;background:#fff"></div>
<div class="a" style="left:388px;top:495px;width:145px;height:20px;background:#fff"></div>
<div class="a" style="left:66px;top:515px;width:160px;height:20px;background:#92d050"></div>
<div class="a" style="left:227px;top:515px;width:160px;height:20px;background:#fff"></div>
<div class="a" style="left:388px;top:515px;width:145px;height:20px;background:#fff"></div>
<div class="a" style="left:66px;top:535px;width:160px;height:20px;background:#92d050"></div>
<div class="a" style="left:227px;top:535px;width:160px;height:20px;background:#fff"></div>
<div class="a" style="left:388px;top:535px;width:145px;height:20px;background:#fff"></div>
<div class="a" style="left:66px;top:555px;width:160px;height:20px;background:#92d050"></div>
<div class="a" style="left:227px;top:555px;width:160px;height:20px;background:#fff"></div>
<div class="a" style="left:388px;top:555px;width:145px;height:20px;background:#fff"></div>
<div class="a" style="left:66px;top:575px;width:160px;height:20px;background:#92d050"></div>
<div class="a" style="left:227px;top:575px;width:160px;height:20px;background:#fff"></div>
<div class="a" style="left:388px;top:575px;width:145px;height:20px;background:#fff"></div>
<div class="a" style="left:66px;top:595px;width:160px;height:20px;background:#92d050"></div>
<div class="a" style="left:227px;top:595px;width:160px;height:20px;background:#fff"></div>
<div class="a" style="left:388px;top:595px;width:145px;height:20px;background:#fff"></div>
<div class="a" style="left:66px;top:615px;width:160px;height:20px;background:#92d050"></div>
<div class="a" style="left:227px;top:615px;width:160px;height:20px;background:#fff"></div>
<div class="a" style="left:388px;top:615px;width:145px;height:20px;background:#fff"></div>
<div class="a" style="left:66px;top:635px;width:160px;height:20px;background:#92d050"></div>
<div class="a" style="left:227px;top:635px;width:160px;height:20px;background:#fff"></div>
<div class="a" style="left:388px;top:635px;width:145px;height:20px;background:#fff"></div>
<div class="a" style="left:66px;top:655px;width:160px;height:20px;background:#92d050"></div>
<div class="a" style="left:227px;top:655px;width:160px;height:20px;background:#fff"></div>
<div class="a" style="left:388px;top:655px;width:145px;height:20px;background:#fff"></div>
<div class="a" style="left:66px;top:235px;width:468px;height:1px;background:#000"></div>
<div class="a" style="left:66px;top:255px;width:468px;height:1px;background:#000"></div>
<div class="a" style="left:66px;top:275px;width:468px;height:1px;background:#000"></div>
<div class="a" style="left:66px;top:295px;width:468px;height:1px;background:#000"></div>
<div class="a" style="left:66px;top:315px;width:468px;height:1px;background:#000"></div>
<div class="a" style="left:66px;top:335px;width:468px;height:1px;background:#000"></div>
<div class="a" style="left:66px;top:355px;width:468px;height:1px;background:#000"></div>
<div class="a" style="left:66px;top:375px;width:468px;height:1px;background:#000"></div>
<div class="a" style="left:66px;top:395px;width:468px;height:1px;background:#000"></div>
<div class="a" style="left:66px;top:415px;width:468px;height:1px;background:#000"></div>
<div class="a" style="left:66px;top:435px;width:468px;height:1px;background:#000"></div>
<div class="a" style="left:66px;top:455px;width:468px;height:1px;background:#000"></div>
<div class="a" style="left:66px;top:475px;width:468px;height:1px;background:#000"></div>
<div class="a" style="left:66px;top:495px;width:468px;height:1px;background:#000"></div>
<div class="a" style="left:66px;top:515px;width:468px;height:1px;background:#000"></div>
<div class="a" style="left:66px;top:535px;width:468px;height:1px;background:#000"></div>
<div class="a" style="left:66px;top:555px;width:468px;height:1px;background:#000"></div>
<div class="a" style="left:66px;top:575px;width:468px;height:1px;background:#000"></div>
<div class="a" style="left:66px;top:595px;width:468px;height:1px;background:#000"></div>
<div class="a" style="left:66px;top:615px;width:468px;height:1px;background:#000"></div>
<div class="a" style="left:66px;top:635px;width:468px;height:1px;background:#000"></div>
<div class="a" style="left:66px;top:655px;width:468px;height:1px;background:#000"></div>
<div class="a" style="left:66px;top:675px;width:468px;height:1px;background:#000"></div>
<div class="a" style="left:226px;top:216px;width:1px;height:455px;background:#000"></div>
<div class="a" style="left:387px;top:216px;width:1px;height:455px;background:#000"></div>
<div class="a" style="left:533px;top:216px;width:1px;height:455px;background:#000"></div>
<div class="t" style="left:98.65px;top:220.13px;font-size:13.2px;letter-spacing:0.291px;color:#000;">Наименование</div>
<div class="t" style="left:292.40px;top:220.13px;font-size:13.2px;letter-spacing:-0.142px;color:#000;">Дата</div>
<div class="t" style="left:394.20px;top:219.96px;font-size:13.4px;color:#000;letter-spacing:0.2px;clip-path:inset(0 9px 0 0)">Сумма выручки, руб</div>
<div class="a" style="left:209px;top:217px;width:17px;height:17px;background:linear-gradient(#fbfcfd,#eef0f4);border:1px solid #b4bccb;border-bottom-color:#a0a4aa;box-sizing:border-box"></div>
<svg style="left:214px;top:224px" width="7" height="4"><path d="M0 0 H7 L3.5 4 Z" fill="#4d535b"/></svg>
<div class="a" style="left:370px;top:217px;width:17px;height:17px;background:linear-gradient(#fbfcfd,#eef0f4);border:1px solid #b4bccb;border-bottom-color:#a0a4aa;box-sizing:border-box"></div>
<svg style="left:375px;top:224px" width="7" height="4"><path d="M0 0 H7 L3.5 4 Z" fill="#4d535b"/></svg>
<div class="a" style="left:516px;top:217px;width:17px;height:17px;background:linear-gradient(#fbfcfd,#eef0f4);border:1px solid #b4bccb;border-bottom-color:#a0a4aa;box-sizing:border-box"></div>
<svg style="left:521px;top:224px" width="7" height="4"><path d="M0 0 H7 L3.5 4 Z" fill="#4d535b"/></svg>
<div class="t" style="left:68.70px;top:241.10px;font-size:12.4px;letter-spacing:0.305px;color:#000;">Картофель</div>
<div class="t" style="left:443.25px;top:241.10px;font-size:12.4px;letter-spacing:0.006px;color:#000;">10526</div>
<div class="t" style="left:68.70px;top:261.10px;font-size:12.4px;letter-spacing:0.305px;color:#000;">Картофель</div>
<div class="t" style="left:443.25px;top:261.10px;font-size:12.4px;letter-spacing:0.236px;color:#000;">11896</div>
<div class="t" style="left:68.70px;top:281.10px;font-size:12.4px;letter-spacing:0.305px;color:#000;">Картофель</div>
<div class="t" style="left:443.25px;top:281.10px;font-size:12.4px;letter-spacing:0.006px;color:#000;">15456</div>
<div class="t" style="left:68.70px;top:301.10px;font-size:12.4px;letter-spacing:0.305px;color:#000;">Картофель</div>
<div class="t" style="left:443.25px;top:301.10px;font-size:12.4px;letter-spacing:0.006px;color:#000;">14589</div>
<div class="t" style="left:68.70px;top:321.10px;font-size:12.4px;letter-spacing:0.305px;color:#000;">Картофель</div>
<div class="t" style="left:443.25px;top:321.10px;font-size:12.4px;letter-spacing:0.006px;color:#000;">12546</div>
<div class="t" style="left:68.70px;top:341.10px;font-size:12.4px;letter-spacing:0.305px;color:#000;">Картофель</div>
<div class="t" style="left:443.25px;top:341.10px;font-size:12.4px;letter-spacing:0.006px;color:#000;">14256</div>
<div class="t" style="left:68.70px;top:361.10px;font-size:12.4px;letter-spacing:0.474px;color:#000;">Мясо</div>
<div class="t" style="left:443.25px;top:361.10px;font-size:12.4px;letter-spacing:0.006px;color:#000;">21563</div>
<div class="t" style="left:68.70px;top:381.10px;font-size:12.4px;letter-spacing:0.474px;color:#000;">Мясо</div>
<div class="t" style="left:443.25px;top:381.10px;font-size:12.4px;letter-spacing:0.006px;color:#000;">10526</div>
<div class="t" style="left:68.70px;top:401.10px;font-size:12.4px;letter-spacing:0.474px;color:#000;">Мясо</div>
<div class="t" style="left:446.70px;top:401.10px;font-size:12.4px;letter-spacing:0.006px;color:#000;">9568</div>
<div class="t" style="left:68.70px;top:421.10px;font-size:12.4px;letter-spacing:0.474px;color:#000;">Мясо</div>
<div class="t" style="left:443.25px;top:421.10px;font-size:12.4px;letter-spacing:0.006px;color:#000;">15461</div>
<div class="t" style="left:68.70px;top:441.10px;font-size:12.4px;letter-spacing:0.474px;color:#000;">Мясо</div>
<div class="t" style="left:443.25px;top:441.10px;font-size:12.4px;letter-spacing:0.006px;color:#000;">10256</div>
<div class="t" style="left:68.70px;top:461.10px;font-size:12.4px;letter-spacing:0.474px;color:#000;">Мясо</div>
<div class="t" style="left:443.25px;top:461.10px;font-size:12.4px;letter-spacing:0.006px;color:#000;">13485</div>
<div class="t" style="left:68.70px;top:481.10px;font-size:12.4px;letter-spacing:0.474px;color:#000;">Мясо</div>
<div class="t" style="left:443.25px;top:481.10px;font-size:12.4px;letter-spacing:0.006px;color:#000;">13978</div>
<div class="t" style="left:68.70px;top:501.10px;font-size:12.4px;letter-spacing:0.268px;color:#000;">Рыба</div>
<div class="t" style="left:443.25px;top:501.10px;font-size:12.4px;letter-spacing:0.006px;color:#000;">17456</div>
<div class="t" style="left:68.70px;top:521.10px;font-size:12.4px;letter-spacing:0.268px;color:#000;">Рыба</div>
<div class="t" style="left:443.25px;top:521.10px;font-size:12.4px;letter-spacing:0.006px;color:#000;">21546</div>
<div class="t" style="left:68.70px;top:541.10px;font-size:12.4px;letter-spacing:0.268px;color:#000;">Рыба</div>
<div class="t" style="left:443.25px;top:541.10px;font-size:12.4px;letter-spacing:0.236px;color:#000;">11496</div>
<div class="t" style="left:68.70px;top:561.10px;font-size:12.4px;letter-spacing:0.268px;color:#000;">Рыба</div>
<div class="t" style="left:443.25px;top:561.10px;font-size:12.4px;letter-spacing:0.006px;color:#000;">10456</div>
<div class="t" style="left:68.70px;top:581.10px;font-size:12.4px;letter-spacing:0.268px;color:#000;">Рыба</div>
<div class="t" style="left:443.25px;top:581.10px;font-size:12.4px;letter-spacing:0.236px;color:#000;">11784</div>
<div class="t" style="left:68.70px;top:601.10px;font-size:12.4px;letter-spacing:0.268px;color:#000;">Рыба</div>
<div class="t" style="left:443.25px;top:601.10px;font-size:12.4px;letter-spacing:0.006px;color:#000;">13858</div>
<div class="t" style="left:68.70px;top:621.10px;font-size:12.4px;letter-spacing:0.090px;color:#000;">Сахар</div>
<div class="t" style="left:446.70px;top:621.10px;font-size:12.4px;letter-spacing:0.006px;color:#000;">8556</div>
<div class="t" style="left:68.70px;top:641.10px;font-size:12.4px;letter-spacing:0.090px;color:#000;">Сахар</div>
<div class="t" style="left:446.70px;top:641.10px;font-size:12.4px;letter-spacing:0.006px;color:#000;">7855</div>
<div class="t" style="left:68.70px;top:661.10px;font-size:12.4px;letter-spacing:0.090px;color:#000;">Сахар</div>
<div class="t" style="left:446.70px;top:661.10px;font-size:12.4px;letter-spacing:0.006px;color:#000;">1234</div>
<div class="t" style="left:275.10px;top:621.10px;font-size:12.4px;letter-spacing:0.194px;color:#000;">01.05.2016</div>
<div class="t" style="left:275.10px;top:641.10px;font-size:12.4px;letter-spacing:0.194px;color:#000;">02.05.2016</div>
<div class="t" style="left:275.10px;top:661.10px;font-size:12.4px;letter-spacing:0.194px;color:#000;">03.05.2016</div>
<div class="a" style="left:387px;top:415px;width:1px;height:17px;background:#fff"></div>
<div class="a" style="left:388px;top:415px;width:1px;height:17px;background:#111"></div>
<div class="a" style="left:388px;top:433px;width:2px;height:2px;background:#111"></div>
<div class="a" style="left:388px;top:436px;width:2px;height:2px;background:#111"></div>
<div class="a" style="left:116px;top:234px;width:272px;height:390px;background:rgba(0,0,0,.10)"></div>
<div class="a" style="left:117px;top:235px;width:270px;height:388px;background:#fff;border:1px solid #b9bfc9;box-sizing:border-box"></div>
<div class="a" style="left:142px;top:236px;width:1px;height:376px;background:#e2e4e7"></div>
<div class="t" style="left:151.00px;top:240.35px;font-size:11.64px;letter-spacing:-0.002px;color:#1b1b1b;">Сортировка от старых к новым</div>
<div class="a" style="left:151px;top:251px;width:8px;height:1px;background:#333"></div>
<div class="t" style="left:151.00px;top:262.35px;font-size:11.64px;letter-spacing:-0.002px;color:#1b1b1b;">Сортировка от новых к старым</div>
<div class="a" style="left:234px;top:273px;width:7px;height:1px;background:#333"></div>
<div class="t" style="left:151.00px;top:283.75px;font-size:11.64px;letter-spacing:0.066px;color:#1b1b1b;">Сортировка по цвету</div>
<div class="a" style="left:151px;top:295px;width:8px;height:1px;background:#333"></div>
<svg style="left:373px;top:286px" width="4" height="7"><path d="M0 0 L4 3.5 L0 7Z" fill="#555"/></svg>
<div class="a" style="left:150px;top:302px;width:234px;height:0;border-top:1px dashed #c5c5c5"></div>
<div class="t" style="left:151.00px;top:310.55px;font-size:11.64px;letter-spacing:-0.201px;color:#a7a7a7;">Удалить фильтр с "Дата"</div>
<div class="a" style="left:151px;top:321px;width:8px;height:1px;background:#a7a7a7"></div>
<div class="t" style="left:151.00px;top:332.05px;font-size:11.64px;letter-spacing:-0.102px;color:#a7a7a7;">Фильтр по цвету</div>
<div class="a" style="left:151px;top:343px;width:9px;height:1px;background:#a7a7a7"></div>
<svg style="left:373px;top:334px" width="4" height="7"><path d="M0 0 L4 3.5 L0 7Z" fill="#bbb"/></svg>
<div class="t" style="left:151.00px;top:353.95px;font-size:11.64px;letter-spacing:-0.199px;color:#1b1b1b;">Фильтры по дате</div>
<div class="a" style="left:151px;top:365px;width:9px;height:1px;background:#333"></div>
<svg style="left:373px;top:356px" width="4" height="7"><path d="M0 0 L4 3.5 L0 7Z" fill="#555"/></svg>
<div class="a" style="left:150px;top:371px;width:234px;height:1px;background:#e3e6ea"></div>
<svg style="left:122px;top:237px" width="16" height="18">
<text x="1" y="8" font-family="Liberation Serif" font-weight="bold" font-size="9.5" fill="#2f5fb0">A</text>
<text x="1" y="16.5" font-family="Liberation Serif" font-weight="bold" font-size="9.5" fill="#9a4b2a">Я</text>
<path d="M12.3 1 V14" stroke="#111" stroke-width="1.3"/><path d="M9.5 11 L12.3 15.5 L15 11" fill="none" stroke="#111" stroke-width="1.3"/></svg>
<svg style="left:122px;top:259px" width="16" height="18">
<text x="1" y="8" font-family="Liberation Serif" font-weight="bold" font-size="9.5" fill="#9a4b2a">Я</text>
<text x="1" y="16.5" font-family="Liberation Serif" font-weight="bold" font-size="9.5" fill="#2f5fb0">A</text>
<path d="M12.3 1 V14" stroke="#111" stroke-width="1.3"/><path d="M9.5 11 L12.3 15.5 L15 11" fill="none" stroke="#111" stroke-width="1.3"/></svg>
<svg style="left:123px;top:310px" width="15" height="13">
<path d="M0.5 0.5 H10.5 L6.5 5 V11 L4.5 9.5 V5 Z" fill="#c9c9c9" stroke="#9d9d9d" stroke-width="1"/>
<path d="M7 6 L13 12 M13 6 L7 12" stroke="#8e8e8e" stroke-width="1.4"/></svg>
<div class="a" style="left:150px;top:378px;width:230px;height:20px;background:#fff;border:1px solid #abadb3;box-sizing:border-box"></div>
<div class="t" style="left:153.00px;top:382.45px;font-size:11.64px;letter-spacing:-0.010px;color:#3a3a3a;">Область поиска: (Все)</div>
<svg style="left:349px;top:380px" width="14" height="14">
<circle cx="8.5" cy="5.5" r="4" fill="none" stroke="#2a6fc9" stroke-width="1.8"/>
<path d="M5.5 8.5 L1.5 12.5" stroke="#1f5fb5" stroke-width="2.2"/></svg>
<div class="a" style="left:365px;top:378px;width:15px;height:20px;background:linear-gradient(#f3f4f6,#dde0e4);border:1px solid #707070;box-sizing:border-box"></div>
<svg style="left:369px;top:386px" width="7" height="4"><path d="M0 0 H7 L3.5 4Z" fill="#222"/></svg>
<div class="a" style="left:150px;top:402px;width:230px;height:168px;background:#fff;border:1px solid #d5dbe3;box-sizing:border-box"></div>
<div class="a" style="left:361px;top:403px;width:18px;height:166px;background:#eceef1"></div>
<svg style="left:366px;top:408px" width="8" height="5"><path d="M0 4.5 L4 0.5 L8 4.5Z" fill="#505050"/></svg>
<svg style="left:366px;top:558px" width="8" height="5"><path d="M0 0.5 L4 4.5 L8 0.5Z" fill="#505050"/></svg>
<div class="a" style="left:362px;top:459px;width:16px;height:92px;background:linear-gradient(90deg,#e8e9eb,#d8dadd);border:1px solid #a4a7ab;border-radius:2px;box-sizing:border-box"></div>
<div class="a" style="left:367px;top:501px;width:6px;height:1px;background:#6c6f73"></div>
<div class="a" style="left:367px;top:503px;width:6px;height:1px;background:#6c6f73"></div>
<div class="a" style="left:367px;top:505px;width:6px;height:1px;background:#6c6f73"></div>
<div class="a" style="left:163px;top:403px;width:0;height:136px;border-left:1px dotted #8a8a8a"></div>
<div class="a" style="left:201px;top:417px;width:0;height:106px;border-left:1px dotted #8a8a8a"></div>
<div class="a" style="left:186px;top:411px;width:6px;height:0;border-top:1px dotted #8a8a8a"></div>
<div class="a" style="left:177px;top:406px;width:9px;height:9px;background:linear-gradient(#fff,#e6e6e6);border:1px solid #9a9a9a;box-sizing:border-box"></div>
<div class="a" style="left:179px;top:410px;width:5px;height:1px;background:#3a3a3a"></div>
<div class="a" style="left:192px;top:405px;width:11px;height:11px;background:#fff;border:1px solid #6f6f6f;box-sizing:border-box"></div>
<div class="a" style="left:195px;top:408px;width:5px;height:5px;background:#111"></div>
<div class="t" style="left:206.00px;top:406.46px;font-size:10.8px;letter-spacing:-0.828px;color:#111;">Май</div>
<div class="a" style="left:202px;top:427px;width:8px;height:0;border-top:1px dotted #8a8a8a"></div>
<div class="a" style="left:211px;top:422px;width:11px;height:11px;background:#fff;border:1px solid #6f6f6f;box-sizing:border-box"></div>
<svg style="left:212px;top:423px" width="9" height="9"><path d="M1.2 4.5 L3.6 7.2 L8 1.5" fill="none" stroke="#111" stroke-width="1.8"/></svg>
<div class="t" style="left:224.50px;top:422.46px;font-size:10.8px;letter-spacing:0.188px;color:#111;">01</div>
<div class="a" style="left:202px;top:443px;width:8px;height:0;border-top:1px dotted #8a8a8a"></div>
<div class="a" style="left:211px;top:438px;width:11px;height:11px;background:#fff;border:1px solid #6f6f6f;box-sizing:border-box"></div>
<svg style="left:212px;top:439px" width="9" height="9"><path d="M1.2 4.5 L3.6 7.2 L8 1.5" fill="none" stroke="#111" stroke-width="1.8"/></svg>
<div class="t" style="left:224.50px;top:438.46px;font-size:10.8px;letter-spacing:0.188px;color:#111;">02</div>
<div class="a" style="left:202px;top:459px;width:8px;height:0;border-top:1px dotted #8a8a8a"></div>
<div class="a" style="left:211px;top:454px;width:11px;height:11px;background:#fff;border:1px solid #6f6f6f;box-sizing:border-box"></div>
<svg style="left:212px;top:455px" width="9" height="9"><path d="M1.2 4.5 L3.6 7.2 L8 1.5" fill="none" stroke="#111" stroke-width="1.8"/></svg>
<div class="t" style="left:224.50px;top:454.46px;font-size:10.8px;letter-spacing:0.188px;color:#111;">03</div>
<div class="a" style="left:202px;top:475px;width:8px;height:0;border-top:1px dotted #8a8a8a"></div>
<div class="a" style="left:211px;top:470px;width:11px;height:11px;background:#fff;border:1px solid #6f6f6f;box-sizing:border-box"></div>
<svg style="left:212px;top:471px" width="9" height="9"><path d="M1.2 4.5 L3.6 7.2 L8 1.5" fill="none" stroke="#111" stroke-width="1.8"/></svg>
<div class="t" style="left:224.50px;top:470.46px;font-size:10.8px;letter-spacing:0.188px;color:#111;">04</div>
<div class="a" style="left:202px;top:491px;width:8px;height:0;border-top:1px dotted #8a8a8a"></div>
<div class="a" style="left:211px;top:486px;width:11px;height:11px;background:#fff;border:1px solid #6f6f6f;box-sizing:border-box"></div>
<svg style="left:212px;top:487px" width="9" height="9"><path d="M1.2 4.5 L3.6 7.2 L8 1.5" fill="none" stroke="#111" stroke-width="1.8"/></svg>
<div class="t" style="left:224.50px;top:486.46px;font-size:10.8px;letter-spacing:0.188px;color:#111;">05</div>
<div class="a" style="left:202px;top:507px;width:8px;height:0;border-top:1px dotted #8a8a8a"></div>
<div class="a" style="left:211px;top:502px;width:11px;height:11px;background:#fff;border:1px solid #6f6f6f;box-sizing:border-box"></div>
<div class="a" style="left:223px;top:500px;width:15px;height:14px;background:#eef0f2"></div>
<div class="t" style="left:224.50px;top:502.46px;font-size:10.8px;letter-spacing:0.188px;color:#111;">06</div>
<div class="a" style="left:202px;top:523px;width:8px;height:0;border-top:1px dotted #8a8a8a"></div>
<div class="a" style="left:211px;top:518px;width:11px;height:11px;background:#fff;border:1px solid #6f6f6f;box-sizing:border-box"></div>
<div class="t" style="left:224.50px;top:518.46px;font-size:10.8px;letter-spacing:0.188px;color:#111;">07</div>
<div class="a" style="left:168px;top:539px;width:6px;height:0;border-top:1px dotted #8a8a8a"></div>
<div class="a" style="left:159px;top:535px;width:9px;height:9px;background:linear-gradient(#fff,#e6e6e6);border:1px solid #9a9a9a;box-sizing:border-box"></div>
<div class="a" style="left:161px;top:539px;width:5px;height:1px;background:#3a3a3a"></div>
<div class="a" style="left:173px;top:534px;width:11px;height:11px;background:#fff;border:1px solid #6f6f6f;box-sizing:border-box"></div>
<svg style="left:174px;top:535px" width="9" height="9"><path d="M1.2 4.5 L3.6 7.2 L8 1.5" fill="none" stroke="#111" stroke-width="1.8"/></svg>
<div class="t" style="left:187.50px;top:534.96px;font-size:10.8px;letter-spacing:0.159px;color:#111;">2016</div>
<div class="a" style="left:186px;top:555px;width:6px;height:0;border-top:1px dotted #8a8a8a"></div>
<div class="a" style="left:177px;top:551px;width:9px;height:9px;background:linear-gradient(#fff,#e6e6e6);border:1px solid #9a9a9a;box-sizing:border-box"></div>
<div class="a" style="left:179px;top:555px;width:5px;height:1px;background:#3a3a3a"></div>
<div class="a" style="left:181px;top:553px;width:1px;height:5px;background:#3a3a3a"></div>
<div class="a" style="left:192px;top:550px;width:11px;height:11px;background:#fff;border:1px solid #6f6f6f;box-sizing:border-box"></div>
<svg style="left:193px;top:551px" width="9" height="9"><path d="M1.2 4.5 L3.6 7.2 L8 1.5" fill="none" stroke="#111" stroke-width="1.8"/></svg>
<div class="t" style="left:206.00px;top:550.96px;font-size:10.8px;letter-spacing:-0.087px;color:#111;">Апрель</div>
<div class="a" style="left:222px;top:586px;width:73px;height:21px;background:linear-gradient(#f4f4f4,#ebebeb 50%,#dcdcdc 51%,#cfcfcf);border:1px solid #3c7fd0;border-radius:3px;box-sizing:border-box;box-shadow:inset 0 0 0 1px #bfe0f5"></div>
<div class="t" style="left:251.90px;top:592.28px;font-size:10.3px;letter-spacing:0.189px;color:#111;">ОК</div>
<div class="a" style="left:307px;top:586px;width:72px;height:21px;background:linear-gradient(#f4f4f4,#ebebeb 50%,#dcdcdc 51%,#cfcfcf);border:1px solid #707070;border-radius:3px;box-sizing:border-box;box-shadow:inset 0 0 0 1px #fbfbfb"></div>
<div class="t" style="left:322.60px;top:591.86px;font-size:10.8px;letter-spacing:0.211px;color:#111;">Отмена</div>
<div class="a" style="left:118px;top:612px;width:268px;height:1px;background:#dde6f0"></div>
<div class="a" style="left:118px;top:613px;width:268px;height:9px;background:linear-gradient(#f9fafb,#e9ecef)"></div>
<div class="a" style="left:381px;top:616px;width:2px;height:2px;background:#8f959c"></div>
<div class="a" style="left:377px;top:620px;width:2px;height:2px;background:#8f959c"></div>
<div class="a" style="left:381px;top:620px;width:2px;height:2px;background:#8f959c"></div>
<div class="a" style="left:185px;top:495.5px;width:94px;height:44px;border:5px solid #fe0404;border-radius:13px;box-sizing:border-box;box-shadow:inset 2px 3px 4px rgba(0,0,0,.2),1px 2px 3px rgba(0,0,0,.28)"></div>
<div class="a" style="left:214.5px;top:569px;width:91px;height:53.5px;border:5.5px solid #fe0404;border-radius:13px;box-sizing:border-box;box-shadow:inset 2px 3px 4px rgba(0,0,0,.2),1px 2px 3px rgba(0,0,0,.28)"></div>
<svg style="left:256.2px;top:481.2px" width="50.6" height="50.6">
<defs><radialGradient id="g1" cx="32%" cy="28%" r="78%"><stop offset="0" stop-color="#f8a67c"/><stop offset=".42" stop-color="#f47643"/><stop offset=".85" stop-color="#e6501f"/><stop offset="1" stop-color="#cf461c"/></radialGradient></defs>
<circle cx="25.3" cy="25.3" r="23.3" fill="url(#g1)" stroke="#9a3c1e" stroke-width="1"/>
<text x="25.3" y="33.5" text-anchor="middle" font-family="Liberation Sans" font-weight="bold" font-size="23" fill="#fff" stroke="#4d3a33" stroke-width="2" paint-order="stroke">1</text>
</svg>
<svg style="left:176.0px;top:577.9000000000001px" width="48.6" height="48.6">
<defs><radialGradient id="g2" cx="32%" cy="28%" r="78%"><stop offset="0" stop-color="#f8a67c"/><stop offset=".42" stop-color="#f47643"/><stop offset=".85" stop-color="#e6501f"/><stop offset="1" stop-color="#cf461c"/></radialGradient></defs>
<circle cx="24.3" cy="24.3" r="22.3" fill="url(#g2)" stroke="#9a3c1e" stroke-width="1"/>
<text x="24.3" y="32.5" text-anchor="middle" font-family="Liberation Sans" font-weight="bold" font-size="22.5" fill="#fff" stroke="#4d3a33" stroke-width="2" paint-order="stroke">2</text>
</svg>
<div class="a" style="left:810px;top:196px;width:6px;height:475px;background:#e4e8ed"></div>
<div class="a" style="left:810px;top:196px;width:1px;height:475px;background:#d0d5db"></div>
<div class="a" style="left:811px;top:197px;width:5px;height:7px;background:#fff;border:1px solid #8d939a;border-right:none;box-sizing:border-box"></div>
<svg style="left:813px;top:211px" width="4" height="4"><path d="M0 4 L3 0.5 L4 0.5 V4Z" fill="#333"/></svg>
<div class="a" style="left:811px;top:221px;width:5px;height:330px;background:linear-gradient(90deg,#fdfdfe,#eef1f5);border:1px solid #9aa0a7;border-right:none;box-sizing:border-box"></div>
<div class="a" style="left:813px;top:381px;width:3px;height:1px;background:#666b72"></div>
<div class="a" style="left:813px;top:383px;width:3px;height:1px;background:#666b72"></div>
<div class="a" style="left:813px;top:385px;width:3px;height:1px;background:#666b72"></div>
<svg style="left:813px;top:659px" width="4" height="4"><path d="M0 0 L3 3.5 L4 3.5 V0Z" fill="#333"/></svg>
<div class="a" style="left:39px;top:671px;width:777px;height:16px;background:linear-gradient(#e6e9ed,#dce0e5)"></div>
<div class="a" style="left:39px;top:671px;width:471px;height:1px;background:#b8bdc3"></div>
<svg style="left:46px;top:675px" width="7" height="8"><rect x="0" y="0" width="1.5" height="8" fill="#333"/><path d="M7 0 V8 L2.5 4Z" fill="#333"/></svg>
<svg style="left:62px;top:675px" width="5" height="8"><path d="M5 0 V8 L0.5 4Z" fill="#333"/></svg>
<svg style="left:76px;top:675px" width="5" height="8"><path d="M0 0 V8 L4.5 4Z" fill="#333"/></svg>
<svg style="left:89px;top:675px" width="7" height="8"><path d="M0 0 V8 L4.5 4Z" fill="#333"/><rect x="5.5" y="0" width="1.5" height="8" fill="#333"/></svg>
<div class="a" style="left:101px;top:672px;width:1px;height:14px;background:#b9bec4"></div>
<svg style="left:100px;top:671px" width="380" height="16">
<path d="M2 0 V15.5 H136 L150 0Z" fill="#fcfcfd"/>
<path d="M2 0 V15.5 H136" fill="none" stroke="#a3a9b0" stroke-width="1"/>
<path d="M136.5 15.5 L150.5 0.5 M205.5 15.5 L219.5 0.5 M270.5 15.5 L284.5 0.5 M329.5 15.5 L343.5 0.5 M359.5 15.5 L373.5 0.5" stroke="#98a0a9" stroke-width="1.1"/>
<path d="M137.5 15.5 L151.5 0.5 M206.5 15.5 L220.5 0.5 M271.5 15.5 L285.5 0.5 M330.5 15.5 L344.5 0.5 M360.5 15.5 L374.5 0.5" stroke="#fff" stroke-width="0.8" opacity=".8"/>
<path d="M136 15.5 H360" stroke="#a9afb6" stroke-width="1"/>
</svg>
<div class="t" style="left:112.00px;top:673.76px;font-size:12.81px;letter-spacing:0.002px;color:#263240;font-weight:bold;">Продукты питания</div>
<div class="t" style="left:251.00px;top:674.61px;font-size:11.8px;letter-spacing:0.089px;color:#3a4350;">Таблица</div>
<div class="t" style="left:318.50px;top:674.61px;font-size:11.8px;letter-spacing:-0.039px;color:#3a4350;">Рассчет</div>
<div class="t" style="left:384.20px;top:674.61px;font-size:11.8px;letter-spacing:-0.269px;color:#3a4350;">Вывод</div>
<svg style="left:441px;top:673px" width="15" height="13"><rect x="2.5" y="3.5" width="11" height="8.5" rx="1" fill="#f4f8fc" stroke="#6d8fb8" stroke-width="1"/><circle cx="4" cy="3.5" r="3" fill="#f2a33a"/></svg>
<div class="a" style="left:503px;top:672px;width:313px;height:15px;background:#e6e9ed"></div>
<div class="a" style="left:504px;top:673px;width:6px;height:13px;background:#fff;border:1px solid #7d838a;box-sizing:border-box"></div>
<svg style="left:515px;top:675px" width="5" height="8"><path d="M5 0 V8 L0.5 4Z" fill="#333"/></svg>
<div class="a" style="left:527px;top:673px;width:225px;height:13px;background:linear-gradient(#f7f8fa,#e4e7eb 50%,#d9dde2);border:1px solid #9aa0a7;border-radius:2px;box-sizing:border-box"></div>
<div class="a" style="left:635px;top:676px;width:1px;height:7px;background:#666b72"></div>
<div class="a" style="left:638px;top:676px;width:1px;height:7px;background:#666b72"></div>
<div class="a" style="left:641px;top:676px;width:1px;height:7px;background:#666b72"></div>
<svg style="left:792px;top:675px" width="5" height="8"><path d="M0 0 V8 L4.5 4Z" fill="#333"/></svg>
<div class="a" style="left:803px;top:673px;width:6px;height:13px;background:#fff;border:1px solid #7d838a;box-sizing:border-box"></div>
<div class="a" style="left:39px;top:687px;width:777px;height:1px;background:#c0c5cb"></div>
<div class="a" style="left:39px;top:688px;width:777px;height:22px;background:linear-gradient(#f1f3f5,#e2e5e9 60%,#d6dade)"></div>
<div class="t" style="left:48.00px;top:692.05px;font-size:11.76px;letter-spacing:-0.002px;color:#273240;">Готово</div>
<div class="a" style="left:94px;top:690px;width:1px;height:19px;background:#c3c8ce"></div>
<div class="a" style="left:95px;top:690px;width:1px;height:19px;background:#fff"></div>
<svg style="left:103px;top:690px" width="16" height="15"><rect x="0.5" y="3.5" width="15" height="11" fill="#fff" stroke="#4a78b0" stroke-width="1"/><rect x="1" y="4" width="14" height="2.5" fill="#4a7fc0"/><path d="M3 8.5 H7 M9 8.5 H13 M3 11 H7 M9 11 H13" stroke="#4a7fc0" stroke-width="1.2"/><circle cx="4" cy="3" r="3" fill="#ee7b2a"/></svg>
<div class="a" style="left:129px;top:690px;width:1px;height:19px;background:#c3c8ce"></div>
<div class="a" style="left:130px;top:690px;width:1px;height:19px;background:#fff"></div>
<div class="a" style="left:570px;top:690px;width:1px;height:19px;background:#c3c8ce"></div>
<div class="a" style="left:571px;top:690px;width:1px;height:19px;background:#fff"></div>
<div class="a" style="left:575px;top:690px;width:18px;height:18px;background:linear-gradient(#fde9a2,#fbd46b);border:1px solid #e2a84a;border-radius:2px;box-sizing:border-box"></div>
<svg style="left:578px;top:693px" width="12" height="11"><rect x="0.5" y="0.5" width="11" height="10" fill="#fff" stroke="#4a5561" stroke-width="1"/><path d="M0.5 3.5 H11.5 M0.5 6.5 H11.5 M4 0.5 V10.5 M7.8 0.5 V10.5" stroke="#4a5561" stroke-width="0.8"/></svg>
<svg style="left:596px;top:692px" width="13" height="13"><rect x="0.5" y="0.5" width="12" height="12" fill="#e4e7eb" stroke="#6b737c" stroke-width="1"/><rect x="3.5" y="2.5" width="6" height="8" fill="#fff" stroke="#6b737c" stroke-width="1"/><path d="M4.5 5 H8.5 M4.5 7 H8.5" stroke="#6b737c" stroke-width="0.8"/></svg>
<svg style="left:614px;top:692px" width="14" height="13"><rect x="0.5" y="0.5" width="13" height="12" fill="#fff" stroke="#6b737c" stroke-width="1"/><rect x="1" y="7" width="12" height="5.5" fill="#8b939c"/><rect x="5" y="1" width="4" height="6" fill="#8b939c"/></svg>
<div class="t" style="left:639.00px;top:693.29px;font-size:11px;letter-spacing:-0.177px;color:#273240;">100%</div>
<svg style="left:674px;top:689px" width="128" height="18">
<path d="M17 9 H117" stroke="#8d949c" stroke-width="1"/><path d="M17 10 H117" stroke="#fff" stroke-width="1"/>
<circle cx="9" cy="9" r="7.5" fill="url(#gz)" stroke="#7a8189" stroke-width="1"/>
<rect x="5" y="8.2" width="8" height="1.8" fill="#333"/>
<circle cx="125" cy="9" r="7.5" fill="url(#gz)" stroke="#7a8189" stroke-width="1"/>
<rect x="121" y="8.2" width="8" height="1.8" fill="#333"/><rect x="124.1" y="5" width="1.8" height="8" fill="#333"/>
<defs><linearGradient id="gz" x1="0" y1="0" x2="0" y2="1"><stop offset="0" stop-color="#fbfbfc"/><stop offset="1" stop-color="#d6dadf"/></linearGradient></defs>
<path d="M63 2.5 H73 V10 L68 14.5 L63 10Z" fill="url(#gz)" stroke="#6d747c" stroke-width="1"/>
</svg>
<div class="a" style="left:39px;top:80px;width:1px;height:630px;background:#6f7882"></div>
<div class="a" style="left:39px;top:709px;width:777px;height:1px;background:#6f7882"></div>
</body></html>
